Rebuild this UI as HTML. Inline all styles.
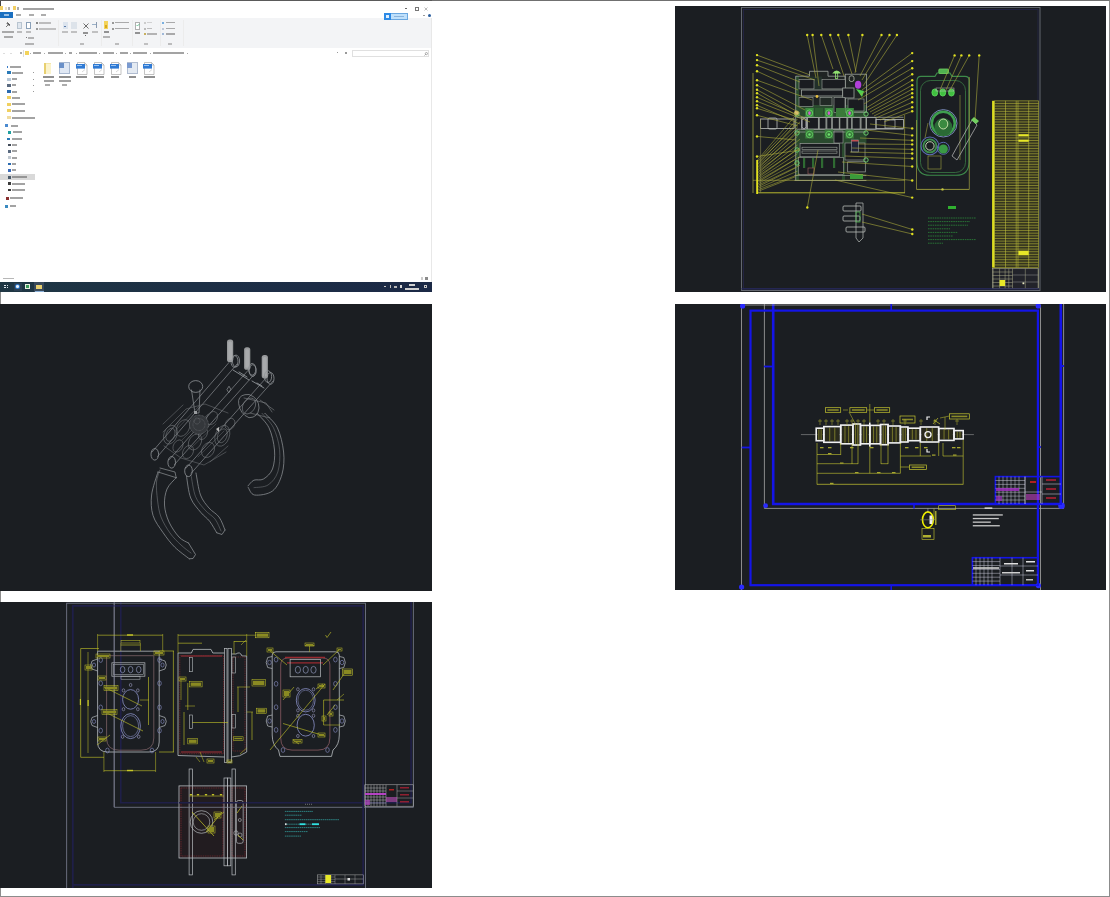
<!DOCTYPE html>
<html><head><meta charset="utf-8">
<style>
html,body{margin:0;padding:0;width:1110px;height:897px;overflow:hidden;background:#fff;}
body{position:relative;font-family:"Liberation Sans",sans-serif;}
.a{position:absolute;}
.bd{position:absolute;left:0;top:0;width:1108px;height:895px;border:1px solid #8c8c8c;border-top-color:#707070;}
.pn{position:absolute;background:#1b1e22;overflow:hidden;}
svg{position:absolute;overflow:hidden;}
.t{position:absolute;font-size:3px;line-height:4px;color:#333;white-space:nowrap;}
</style></head><body>
<div class="bd"></div>
<div id="exp" class="a" style="left:0;top:0;width:432px;height:292px;background:#fff;overflow:hidden;">
<div class="a" style="left:0px;top:0px;width:432px;height:1px;background:#5a5a5a;"></div>
<div class="a" style="left:0px;top:1px;width:1px;height:5px;background:#444;"></div>
<div class="a" style="left:0px;top:6px;width:3px;height:4px;background:#f2cf63;"></div>
<div class="a" style="left:4.5px;top:7px;width:2.5px;height:3px;background:#e8e0c8;"></div>
<div class="a" style="left:8px;top:7px;width:2px;height:3px;background:#b0b0b0;"></div>
<div class="a" style="left:13px;top:6px;width:3px;height:4px;background:#f2cf63;"></div>
<div class="a" style="left:17px;top:7.4px;width:1.5px;height:2.2px;background:#777;opacity:0.62;"></div>
<div class="a" style="left:23px;top:7.5px;width:31px;height:2.0px;background:#6a6a6a;opacity:0.62;"></div>
<div class="a" style="left:404.5px;top:8.2px;width:2.6px;height:0.5px;background:#666;"></div>
<div class="a" style="left:414.5px;top:7px;width:2.4px;height:2.4px;background:#fff;border:0.5px solid #777;"></div>
<svg style="left:424px;top:6.5px" width="4" height="4" viewBox="0 0 4 4"><path d="M0.5,0.5 L3.5,3.5 M3.5,0.5 L0.5,3.5" stroke="#666" stroke-width="0.45"/></svg>
<div class="a" style="left:0px;top:12px;width:13px;height:6px;background:#1a6fc0;"></div>
<div class="a" style="left:4px;top:14.0px;width:5px;height:2px;background:#e6f0fa;opacity:0.62;"></div>
<div class="a" style="left:16px;top:14.0px;width:5px;height:2px;background:#7a7a7a;opacity:0.62;"></div>
<div class="a" style="left:28.5px;top:14.0px;width:5px;height:2px;background:#7a7a7a;opacity:0.62;"></div>
<div class="a" style="left:40.5px;top:14.0px;width:5px;height:2px;background:#7a7a7a;opacity:0.62;"></div>
<div class="a" style="left:427.8px;top:13.8px;width:3.2px;height:3.2px;background:#2a5e9e;border-radius:50%;"></div>
<div class="a" style="left:423px;top:15px;width:1.5px;height:0.8px;background:#999;"></div>
<div class="a" style="left:0px;top:18px;width:431px;height:30px;background:#f3f4f6;border-bottom:1px solid #e3e4e6;"></div>
<div class="a" style="left:384px;top:13px;width:24px;height:7px;background:#bfe0fb;border:0.5px solid #6aa7e0;box-sizing:border-box;"></div>
<div class="a" style="left:384px;top:13px;width:6.5px;height:7px;background:#2d8ae6;"></div>
<div class="a" style="left:385.5px;top:14.5px;width:3.5px;height:3.5px;background:#e0f0ff;"></div>
<div class="a" style="left:394px;top:15.6px;width:10px;height:1.8px;background:#6a9ac8;opacity:0.62;"></div>
<svg style="left:5px;top:21px" width="6" height="7" viewBox="0 0 6 7"><path d="M1,6 L3.5,3.5 M2.5,1.5 L5,4 L4,4.5 L3,3.5 L2,2.5 Z" stroke="#444" stroke-width="0.7" fill="#666"/></svg>
<div class="a" style="left:2px;top:31.199999999999996px;width:12px;height:2.2px;background:#7a7a7a;opacity:0.62;"></div>
<div class="a" style="left:3.5px;top:35.5px;width:9px;height:2.2px;background:#7a7a7a;opacity:0.62;"></div>
<div class="a" style="left:17px;top:22px;width:4.5px;height:6.5px;background:#dfe6ee;border:0.5px solid #b8c4d0;box-sizing:border-box;"></div>
<div class="a" style="left:16.6px;top:31.199999999999996px;width:5px;height:2.2px;background:#9a9a9a;opacity:0.62;"></div>
<div class="a" style="left:26px;top:21.5px;width:5px;height:7.5px;background:#fff;border:0.6px solid #8aa0b8;box-sizing:border-box;"></div>
<div class="a" style="left:26px;top:31.199999999999996px;width:5px;height:2.2px;background:#9a9a9a;opacity:0.62;"></div>
<div class="a" style="left:36px;top:22px;width:1.5px;height:1.5px;background:#888;"></div>
<div class="a" style="left:38.5px;top:22.1px;width:12px;height:1.8px;background:#9a9a9a;opacity:0.62;"></div>
<div class="a" style="left:36px;top:27.8px;width:1.5px;height:2px;background:#999;"></div>
<div class="a" style="left:38.5px;top:27.8px;width:17px;height:1.8px;background:#a0a0a0;opacity:0.62;"></div>
<div class="a" style="left:25.5px;top:36.5px;width:1.5px;height:1.8px;background:#777;"></div>
<div class="a" style="left:28px;top:36.800000000000004px;width:6px;height:1.8px;background:#8a8a8a;opacity:0.62;"></div>
<div class="a" style="left:25px;top:43.300000000000004px;width:8.5px;height:1.8px;background:#8a8a8a;opacity:0.62;"></div>
<div class="a" style="left:57.5px;top:20px;width:0.5px;height:26px;background:#ececec;"></div>
<div class="a" style="left:62.6px;top:21.5px;width:5px;height:7px;background:#dce4ee;"></div>
<div class="a" style="left:64.3px;top:25.5px;width:1.6px;height:1.6px;background:#5a7aa8;"></div>
<div class="a" style="left:62px;top:31.199999999999996px;width:6px;height:2.2px;background:#a0a0a0;opacity:0.62;"></div>
<div class="a" style="left:71px;top:21.5px;width:5.5px;height:7px;background:#dde3ea;"></div>
<div class="a" style="left:71px;top:31.199999999999996px;width:6px;height:2.2px;background:#a0a0a0;opacity:0.62;"></div>
<svg style="left:82.5px;top:22.5px" width="6" height="6" viewBox="0 0 6 6"><path d="M0.5,0.5 L5.5,5.5 M5.5,0.5 L0.5,5.5" stroke="#333" stroke-width="0.7"/></svg>
<div class="a" style="left:82.5px;top:31.699999999999996px;width:5.5px;height:2.2px;background:#555;opacity:0.62;"></div>
<div class="a" style="left:85px;top:34.5px;width:0.8px;height:1.2px;background:#666;"></div>
<div class="a" style="left:92px;top:23.5px;width:4px;height:1px;background:#9ab0c8;"></div>
<div class="a" style="left:95.5px;top:22px;width:0.8px;height:6px;background:#8a9ab0;"></div>
<div class="a" style="left:91.8px;top:31.199999999999996px;width:6px;height:2.2px;background:#a0a0a0;opacity:0.62;"></div>
<div class="a" style="left:80px;top:43.300000000000004px;width:3.5px;height:1.8px;background:#9a9a9a;opacity:0.62;"></div>
<div class="a" style="left:101px;top:20px;width:0.5px;height:26px;background:#ececec;"></div>
<div class="a" style="left:104.2px;top:21px;width:3.8px;height:8px;background:#f3d35a;"></div>
<div class="a" style="left:104.8px;top:25px;width:2.5px;height:2.5px;background:#d8a820;"></div>
<div class="a" style="left:104px;top:31.199999999999996px;width:4.5px;height:2.2px;background:#555;opacity:0.62;"></div>
<div class="a" style="left:103px;top:36.300000000000004px;width:6.5px;height:1.8px;background:#8a8a8a;opacity:0.62;"></div>
<div class="a" style="left:112.3px;top:21.6px;width:1.8px;height:2px;background:#999;"></div>
<div class="a" style="left:115px;top:21.700000000000003px;width:14px;height:1.8px;background:#7a7a7a;opacity:0.62;"></div>
<div class="a" style="left:112.3px;top:27.5px;width:1.8px;height:2px;background:#999;"></div>
<div class="a" style="left:115px;top:27.6px;width:14px;height:1.8px;background:#7a7a7a;opacity:0.62;"></div>
<div class="a" style="left:115px;top:43.300000000000004px;width:4px;height:1.8px;background:#9a9a9a;opacity:0.62;"></div>
<div class="a" style="left:132px;top:20px;width:0.5px;height:26px;background:#ececec;"></div>
<div class="a" style="left:135px;top:21.5px;width:5px;height:8px;background:#fff;border:0.6px solid #b0b0b0;box-sizing:border-box;"></div>
<svg style="left:135.5px;top:23px" width="4" height="4" viewBox="0 0 4 4"><path d="M0.5,2 L1.5,3 L3.5,0.8" stroke="#2a6" stroke-width="0.6" fill="none"/></svg>
<div class="a" style="left:134.5px;top:31.699999999999996px;width:5px;height:2.2px;background:#555;opacity:0.62;"></div>
<div class="a" style="left:143.6px;top:22px;width:2px;height:2px;background:#ccc;"></div>
<div class="a" style="left:146.5px;top:21.700000000000003px;width:5px;height:1.8px;background:#bbb;opacity:0.62;"></div>
<div class="a" style="left:143.6px;top:27.6px;width:2px;height:2px;background:#bbb;"></div>
<div class="a" style="left:146.5px;top:27.6px;width:5px;height:1.8px;background:#9a9a9a;opacity:0.62;"></div>
<div class="a" style="left:143.6px;top:33px;width:2px;height:2px;background:#c8b060;"></div>
<div class="a" style="left:146.5px;top:33.1px;width:10px;height:1.8px;background:#8a8a8a;opacity:0.62;"></div>
<div class="a" style="left:143.5px;top:43.300000000000004px;width:4px;height:1.8px;background:#a0a0a0;opacity:0.62;"></div>
<div class="a" style="left:160px;top:20px;width:0.5px;height:26px;background:#ececec;"></div>
<div class="a" style="left:162px;top:21.5px;width:2.2px;height:2.6px;background:#7ab0e0;"></div>
<div class="a" style="left:165.5px;top:21.700000000000003px;width:9px;height:1.8px;background:#7a7a7a;opacity:0.62;"></div>
<div class="a" style="left:162px;top:27.5px;width:2.2px;height:2.2px;background:#c0c8d8;"></div>
<div class="a" style="left:165.5px;top:27.6px;width:9px;height:1.8px;background:#7a7a7a;opacity:0.62;"></div>
<div class="a" style="left:162px;top:33px;width:2.2px;height:2.2px;background:#a0b8d8;"></div>
<div class="a" style="left:165.5px;top:33.1px;width:9px;height:1.8px;background:#7a7a7a;opacity:0.62;"></div>
<div class="a" style="left:167.5px;top:43.300000000000004px;width:4px;height:1.8px;background:#9a9a9a;opacity:0.62;"></div>
<div class="a" style="left:183px;top:20px;width:0.5px;height:26px;background:#ececec;"></div>
<div class="a" style="left:0px;top:48px;width:431px;height:10px;background:#fff;"></div>
<div class="a" style="left:2.5px;top:52.5px;width:2px;height:1.2px;background:#c8c8c8;opacity:0.62;"></div>
<div class="a" style="left:9.5px;top:52.5px;width:2px;height:1.2px;background:#c8c8c8;opacity:0.62;"></div>
<div class="a" style="left:20px;top:52.4px;width:2px;height:1.4px;background:#777;opacity:0.62;"></div>
<div class="a" style="left:25.2px;top:51.2px;width:3.6px;height:3.6px;background:#f3d35a;"></div>
<div class="a" style="left:22.5px;top:49.5px;width:0.5px;height:7px;background:#ddd;"></div>
<div class="a" style="left:33.3px;top:52.15px;width:8.100000000000001px;height:1.9px;background:#6a6a6a;opacity:0.62;"></div>
<div class="a" style="left:29.799999999999997px;top:52.5px;width:1px;height:1.2px;background:#aaa;"></div>
<div class="a" style="left:47.7px;top:52.15px;width:15.299999999999997px;height:1.9px;background:#6a6a6a;opacity:0.62;"></div>
<div class="a" style="left:44.2px;top:52.5px;width:1px;height:1.2px;background:#aaa;"></div>
<div class="a" style="left:68.5px;top:52.15px;width:3.5px;height:1.9px;background:#6a6a6a;opacity:0.62;"></div>
<div class="a" style="left:65.0px;top:52.5px;width:1px;height:1.2px;background:#aaa;"></div>
<div class="a" style="left:79.3px;top:52.15px;width:18.0px;height:1.9px;background:#6a6a6a;opacity:0.62;"></div>
<div class="a" style="left:75.8px;top:52.5px;width:1px;height:1.2px;background:#aaa;"></div>
<div class="a" style="left:102.7px;top:52.15px;width:11.700000000000003px;height:1.9px;background:#6a6a6a;opacity:0.62;"></div>
<div class="a" style="left:99.2px;top:52.5px;width:1px;height:1.2px;background:#aaa;"></div>
<div class="a" style="left:119.8px;top:52.15px;width:8.200000000000003px;height:1.9px;background:#6a6a6a;opacity:0.62;"></div>
<div class="a" style="left:116.3px;top:52.5px;width:1px;height:1.2px;background:#aaa;"></div>
<div class="a" style="left:133.3px;top:52.15px;width:13.5px;height:1.9px;background:#6a6a6a;opacity:0.62;"></div>
<div class="a" style="left:129.8px;top:52.5px;width:1px;height:1.2px;background:#aaa;"></div>
<div class="a" style="left:153.2px;top:52.15px;width:30.600000000000023px;height:1.9px;background:#6a6a6a;opacity:0.62;"></div>
<div class="a" style="left:149.7px;top:52.5px;width:1px;height:1.2px;background:#aaa;"></div>
<div class="a" style="left:186.5px;top:52.5px;width:1.2px;height:1.2px;background:#aaa;"></div>
<div class="a" style="left:337px;top:52.3px;width:1.4px;height:1px;background:#999;"></div>
<div class="a" style="left:345px;top:51.8px;width:1.6px;height:2px;background:#999;"></div>
<div class="a" style="left:352px;top:49.6px;width:77px;height:7.9px;background:#fff;border:0.5px solid #e0e0e0;box-sizing:border-box;"></div>
<svg style="left:424px;top:51.5px" width="4" height="4" viewBox="0 0 4 4"><circle cx="2.4" cy="1.6" r="1.1" stroke="#666" stroke-width="0.5" fill="none"/><path d="M1.6,2.4 L0.5,3.5" stroke="#666" stroke-width="0.6"/></svg>
<div class="a" style="left:6.7px;top:65.6px;width:1.8px;height:2px;background:#3a7cc8;"></div>
<div class="a" style="left:10.4px;top:65.6px;width:10.299999999999999px;height:2.0px;background:#6a6a6a;opacity:0.62;"></div>
<div class="a" style="left:7.4px;top:71.4px;width:3.2px;height:3px;background:#2a7ab8;"></div>
<div class="a" style="left:12.4px;top:71.9px;width:10.299999999999999px;height:2.0px;background:#6a6a6a;opacity:0.62;"></div>
<div class="a" style="left:32.5px;top:72.30000000000001px;width:0.8px;height:1.2px;background:#999;"></div>
<div class="a" style="left:7.4px;top:77.6px;width:3.2px;height:3px;background:#b8c8d8;"></div>
<div class="a" style="left:12.4px;top:78.1px;width:4.999999999999998px;height:2.0px;background:#6a6a6a;opacity:0.62;"></div>
<div class="a" style="left:32.5px;top:78.5px;width:0.8px;height:1.2px;background:#999;"></div>
<div class="a" style="left:7.4px;top:83.9px;width:3.2px;height:3px;background:#5a6a80;"></div>
<div class="a" style="left:12.4px;top:84.4px;width:4.1px;height:2.0px;background:#6a6a6a;opacity:0.62;"></div>
<div class="a" style="left:32.5px;top:84.80000000000001px;width:0.8px;height:1.2px;background:#999;"></div>
<div class="a" style="left:7.4px;top:90.1px;width:3.2px;height:3px;background:#2a6ab0;"></div>
<div class="a" style="left:12.4px;top:90.6px;width:4.4px;height:2.0px;background:#6a6a6a;opacity:0.62;"></div>
<div class="a" style="left:32.5px;top:91.0px;width:0.8px;height:1.2px;background:#999;"></div>
<div class="a" style="left:7.4px;top:96.4px;width:3.2px;height:3px;background:#f0d060;"></div>
<div class="a" style="left:12.4px;top:96.9px;width:7.299999999999999px;height:2.0px;background:#6a6a6a;opacity:0.62;"></div>
<div class="a" style="left:7.4px;top:102.6px;width:3.2px;height:3px;background:#f0d060;"></div>
<div class="a" style="left:12.4px;top:103.1px;width:12.999999999999998px;height:2.0px;background:#6a6a6a;opacity:0.62;"></div>
<div class="a" style="left:7.4px;top:109.2px;width:3.2px;height:3px;background:#f0d060;"></div>
<div class="a" style="left:12.4px;top:109.7px;width:12.999999999999998px;height:2.0px;background:#6a6a6a;opacity:0.62;"></div>
<div class="a" style="left:7.4px;top:116.0px;width:3.2px;height:3px;background:#f0dca0;"></div>
<div class="a" style="left:12.4px;top:116.5px;width:22.4px;height:2.0px;background:#6a6a6a;opacity:0.62;"></div>
<div class="a" style="left:0px;top:174.1px;width:35px;height:5.8px;background:#d9d9d9;"></div>
<div class="a" style="left:5.3px;top:124.39999999999999px;width:2.8px;height:2.8px;background:#4a8ad0;"></div>
<div class="a" style="left:10.6px;top:124.8px;width:7.4px;height:2.0px;background:#6a6a6a;opacity:0.62;"></div>
<div class="a" style="left:8px;top:130.79999999999998px;width:2.8px;height:2.8px;background:#20a0a0;"></div>
<div class="a" style="left:12.7px;top:131.2px;width:9.5px;height:2.0px;background:#6a6a6a;opacity:0.62;"></div>
<div class="a" style="left:7.4px;top:137.5px;width:2.8px;height:2.8px;background:#2a7ab8;"></div>
<div class="a" style="left:12.2px;top:137.9px;width:10.3px;height:2.0px;background:#6a6a6a;opacity:0.62;"></div>
<div class="a" style="left:7.8px;top:143.7px;width:2.8px;height:2.8px;background:#404a58;"></div>
<div class="a" style="left:12.2px;top:144.1px;width:4.800000000000001px;height:2.0px;background:#6a6a6a;opacity:0.62;"></div>
<div class="a" style="left:7.8px;top:149.79999999999998px;width:2.8px;height:2.8px;background:#5a6a80;"></div>
<div class="a" style="left:12.2px;top:150.2px;width:4.800000000000001px;height:2.0px;background:#6a6a6a;opacity:0.62;"></div>
<div class="a" style="left:7.8px;top:156.2px;width:2.8px;height:2.8px;background:#c0c8d0;"></div>
<div class="a" style="left:12.2px;top:156.6px;width:4.800000000000001px;height:2.0px;background:#6a6a6a;opacity:0.62;"></div>
<div class="a" style="left:7.8px;top:162.6px;width:2.8px;height:2.8px;background:#2a6ab0;"></div>
<div class="a" style="left:12.2px;top:163.0px;width:4.300000000000001px;height:2.0px;background:#6a6a6a;opacity:0.62;"></div>
<div class="a" style="left:7.8px;top:168.9px;width:2.8px;height:2.8px;background:#3a6ab8;"></div>
<div class="a" style="left:12.2px;top:169.3px;width:4.300000000000001px;height:2.0px;background:#6a6a6a;opacity:0.62;"></div>
<div class="a" style="left:7.8px;top:175.79999999999998px;width:2.8px;height:2.8px;background:#4a5a6a;"></div>
<div class="a" style="left:12.2px;top:176.2px;width:15.3px;height:2.0px;background:#6a6a6a;opacity:0.62;"></div>
<div class="a" style="left:7.8px;top:182.2px;width:2.8px;height:2.8px;background:#3a3a3a;"></div>
<div class="a" style="left:12.2px;top:182.6px;width:13.2px;height:2.0px;background:#6a6a6a;opacity:0.62;"></div>
<div class="a" style="left:7.8px;top:188.5px;width:2.8px;height:2.8px;background:#3a3a3a;"></div>
<div class="a" style="left:12.2px;top:188.9px;width:12.8px;height:2.0px;background:#6a6a6a;opacity:0.62;"></div>
<div class="a" style="left:5.8px;top:197.0px;width:2.8px;height:2.8px;background:#8a3030;"></div>
<div class="a" style="left:10px;top:197.4px;width:13.3px;height:2.0px;background:#6a6a6a;opacity:0.62;"></div>
<div class="a" style="left:5.3px;top:204.9px;width:2.8px;height:2.8px;background:#3a8ac0;"></div>
<div class="a" style="left:10px;top:205.3px;width:5.9px;height:2.0px;background:#6a6a6a;opacity:0.62;"></div>
<div class="a" style="left:44.4px;top:62.6px;width:6.4px;height:11px;background:#f3e6a8;"></div>
<div class="a" style="left:45.5px;top:63.5px;width:5px;height:10px;background:#fbf3cc;"></div>
<div class="a" style="left:44.4px;top:62.6px;width:1.2px;height:11px;background:#e8d070;"></div>
<div class="a" style="left:59px;top:62px;width:11px;height:11.5px;background:#e0e8f4;border:0.5px solid #a8b8d0;box-sizing:border-box;"></div>
<div class="a" style="left:59px;top:63px;width:5px;height:5px;background:#6a90c8;"></div>
<div class="a" style="left:127px;top:62px;width:10.5px;height:11.5px;background:#e4eaf2;border:0.5px solid #b0bcd0;box-sizing:border-box;"></div>
<div class="a" style="left:127px;top:63px;width:5px;height:5px;background:#7a9ad0;"></div>
<svg style="left:76px;top:61.5px" width="12" height="13" viewBox="0 0 12 13"><path d="M1.5,0.5 L8.5,0.5 L11,3 L11,12.5 L1.5,12.5 Z" fill="#fff" stroke="#9a9a9a" stroke-width="0.6"/><path d="M8.5,0.5 L8.5,3 L11,3" fill="none" stroke="#9a9a9a" stroke-width="0.5"/><rect x="0" y="2" width="9" height="4.6" fill="#2f7ad4"/><rect x="1" y="3" width="5" height="1" fill="#9cc4f0"/><path d="M6,10 L9,7.5" stroke="#b0b0b0" stroke-width="0.5"/></svg>
<svg style="left:93px;top:61.5px" width="12" height="13" viewBox="0 0 12 13"><path d="M1.5,0.5 L8.5,0.5 L11,3 L11,12.5 L1.5,12.5 Z" fill="#fff" stroke="#9a9a9a" stroke-width="0.6"/><path d="M8.5,0.5 L8.5,3 L11,3" fill="none" stroke="#9a9a9a" stroke-width="0.5"/><rect x="0" y="2" width="9" height="4.6" fill="#2f7ad4"/><rect x="1" y="3" width="5" height="1" fill="#9cc4f0"/><path d="M6,10 L9,7.5" stroke="#b0b0b0" stroke-width="0.5"/></svg>
<svg style="left:110px;top:61.5px" width="12" height="13" viewBox="0 0 12 13"><path d="M1.5,0.5 L8.5,0.5 L11,3 L11,12.5 L1.5,12.5 Z" fill="#fff" stroke="#9a9a9a" stroke-width="0.6"/><path d="M8.5,0.5 L8.5,3 L11,3" fill="none" stroke="#9a9a9a" stroke-width="0.5"/><rect x="0" y="2" width="9" height="4.6" fill="#2f7ad4"/><rect x="1" y="3" width="5" height="1" fill="#9cc4f0"/><path d="M6,10 L9,7.5" stroke="#b0b0b0" stroke-width="0.5"/></svg>
<svg style="left:143.3px;top:61.5px" width="12" height="13" viewBox="0 0 12 13"><path d="M1.5,0.5 L8.5,0.5 L11,3 L11,12.5 L1.5,12.5 Z" fill="#fff" stroke="#9a9a9a" stroke-width="0.6"/><path d="M8.5,0.5 L8.5,3 L11,3" fill="none" stroke="#9a9a9a" stroke-width="0.5"/><rect x="0" y="2" width="9" height="4.6" fill="#2f7ad4"/><rect x="1" y="3" width="5" height="1" fill="#9cc4f0"/><path d="M6,10 L9,7.5" stroke="#b0b0b0" stroke-width="0.5"/></svg>
<div class="a" style="left:43px;top:75.8px;width:11px;height:1.8px;background:#4a4a4a;opacity:0.62;"></div>
<div class="a" style="left:58.5px;top:75.8px;width:12px;height:1.8px;background:#4a4a4a;opacity:0.62;"></div>
<div class="a" style="left:76px;top:75.8px;width:11px;height:1.8px;background:#4a4a4a;opacity:0.62;"></div>
<div class="a" style="left:93.5px;top:75.8px;width:10px;height:1.8px;background:#4a4a4a;opacity:0.62;"></div>
<div class="a" style="left:111px;top:75.8px;width:8px;height:1.8px;background:#4a4a4a;opacity:0.62;"></div>
<div class="a" style="left:129px;top:75.8px;width:7px;height:1.8px;background:#4a4a4a;opacity:0.62;"></div>
<div class="a" style="left:144px;top:75.8px;width:11px;height:1.8px;background:#4a4a4a;opacity:0.62;"></div>
<div class="a" style="left:43.5px;top:79.7px;width:10px;height:2.0px;background:#6a6a6a;opacity:0.62;"></div>
<div class="a" style="left:45px;top:83.9px;width:5px;height:2.0px;background:#7a7a7a;opacity:0.62;"></div>
<div class="a" style="left:58.5px;top:79.7px;width:12px;height:2.0px;background:#6a6a6a;opacity:0.62;"></div>
<div class="a" style="left:62px;top:84.10000000000001px;width:5px;height:1.6px;background:#7a7a7a;opacity:0.62;"></div>
<div class="a" style="left:3px;top:277.6px;width:11px;height:1.8px;background:#8a8a8a;opacity:0.62;"></div>
<div class="a" style="left:421px;top:277px;width:1.8px;height:2.5px;background:#ccc;"></div>
<div class="a" style="left:425px;top:277px;width:2.5px;height:2.5px;background:#8a8a8a;"></div>
<div class="a" style="left:430.8px;top:18px;width:0.6px;height:264px;background:#e8e8e8;"></div>
<div class="a" style="left:0px;top:281.8px;width:432px;height:10px;background:linear-gradient(90deg,#1f3744,#1d2f45 45%,#1b2946);"></div>
<div class="a" style="left:3.8px;top:284.5px;width:3.8px;height:3.8px;background:#dfe8ee;"></div>
<div class="a" style="left:5.5px;top:284.5px;width:0.4px;height:3.8px;background:#1f3744;"></div>
<div class="a" style="left:3.8px;top:286.3px;width:3.8px;height:0.4px;background:#1f3744;"></div>
<div class="a" style="left:13.5px;top:283px;width:8px;height:8px;background:#2b3f52;"></div>
<div class="a" style="left:14.8px;top:284px;width:5.2px;height:5.2px;background:#2d7bd0;border-radius:50%;"></div>
<div class="a" style="left:16px;top:285.3px;width:2.6px;height:2.6px;background:#e8f0f8;border-radius:50%;"></div>
<div class="a" style="left:25.4px;top:283.8px;width:4.9px;height:5.6px;background:#e8f0e0;"></div>
<div class="a" style="left:26.3px;top:284.8px;width:3px;height:3.5px;background:#3a9a5a;"></div>
<div class="a" style="left:34px;top:282px;width:10.3px;height:9.8px;background:#3a4a5c;"></div>
<div class="a" style="left:35.8px;top:284.5px;width:6.5px;height:4.5px;background:#e8d070;"></div>
<div class="a" style="left:35px;top:290.6px;width:9px;height:1px;background:#8ab0d8;"></div>
<div class="a" style="left:384px;top:286px;width:1.8px;height:0.8px;background:#c8c8c8;"></div>
<div class="a" style="left:389.5px;top:285px;width:1.6px;height:2.8px;background:#c0c0c0;"></div>
<div class="a" style="left:394px;top:285.5px;width:2.5px;height:2px;background:#b8b8b8;"></div>
<div class="a" style="left:399.5px;top:285px;width:2.5px;height:2.8px;background:#d8d8d8;"></div>
<div class="a" style="left:409px;top:284px;width:5.5px;height:1.6px;background:#d0d0d0;"></div>
<div class="a" style="left:405px;top:288.3px;width:13.5px;height:1.8px;background:#d0d0d0;"></div>
<div class="a" style="left:423.8px;top:284.5px;width:3.2px;height:3.5px;background:#0f1a30;border:0.6px solid #c8c8c8;box-sizing:border-box;"></div>
</div>
<svg style="left:0px;top:304px" width="432" height="287" viewBox="0 304 432 287"><rect x="0" y="304" width="432" height="287" fill="#1b1e22"/><path d="M237.2,363.8 L157.5,456.6" stroke="#8f9397" stroke-width="0.65" fill="none" stroke-linejoin="round" stroke-linecap="round"/><path d="M231.8,359.2 L152.1,452.0" stroke="#8f9397" stroke-width="0.65" fill="none" stroke-linejoin="round" stroke-linecap="round"/><ellipse cx="154.8" cy="454.3" rx="3.8" ry="5.8" transform="rotate(180.65717807954863 154.8 454.3)" stroke="#8f9397" stroke-width="0.8" fill="none"/><ellipse cx="234.5" cy="361.5" rx="3.5" ry="5.9" transform="rotate(0 234.5 361.5)" stroke="#8f9397" stroke-width="0.8" fill="none"/><path d="M255.4,373.0 L174.4,464.7" stroke="#8f9397" stroke-width="0.65" fill="none" stroke-linejoin="round" stroke-linecap="round"/><path d="M250.0,368.2 L169.0,459.9" stroke="#8f9397" stroke-width="0.65" fill="none" stroke-linejoin="round" stroke-linecap="round"/><ellipse cx="171.7" cy="462.3" rx="3.8" ry="5.8" transform="rotate(181.4546485951503 171.7 462.3)" stroke="#8f9397" stroke-width="0.8" fill="none"/><ellipse cx="252.7" cy="370.6" rx="3.5" ry="5.9" transform="rotate(0 252.7 370.6)" stroke="#8f9397" stroke-width="0.8" fill="none"/><path d="M273.2,380.8 L191.2,473.2" stroke="#8f9397" stroke-width="0.65" fill="none" stroke-linejoin="round" stroke-linecap="round"/><path d="M267.8,376.0 L185.8,468.4" stroke="#8f9397" stroke-width="0.65" fill="none" stroke-linejoin="round" stroke-linecap="round"/><ellipse cx="188.5" cy="470.8" rx="3.8" ry="5.8" transform="rotate(181.58732064841314 188.5 470.8)" stroke="#8f9397" stroke-width="0.8" fill="none"/><ellipse cx="270.5" cy="378.4" rx="3.5" ry="5.9" transform="rotate(0 270.5 378.4)" stroke="#8f9397" stroke-width="0.8" fill="none"/><rect x="227" y="339.4" width="6.2" height="22.600000000000023" rx="2.6" fill="#989a9c"/><rect x="228.2" y="341.4" width="3.8" height="18.600000000000023" rx="1.5" fill="#a8aaac"/><rect x="244.1" y="347.2" width="6.2" height="22.600000000000023" rx="2.6" fill="#989a9c"/><rect x="245.29999999999998" y="349.2" width="3.8" height="18.600000000000023" rx="1.5" fill="#a8aaac"/><rect x="261.7" y="355" width="6.2" height="23.399999999999977" rx="2.6" fill="#989a9c"/><rect x="262.9" y="357" width="3.8" height="19.399999999999977" rx="1.5" fill="#a8aaac"/><ellipse cx="236" cy="361" rx="3.6" ry="5.9" transform="rotate(0 236 361)" stroke="#8f9397" stroke-width="0.8" fill="none"/><ellipse cx="252.2" cy="369.3" rx="3.6" ry="5.9" transform="rotate(0 252.2 369.3)" stroke="#8f9397" stroke-width="0.8" fill="none"/><ellipse cx="268" cy="376.6" rx="3.6" ry="5.9" transform="rotate(0 268 376.6)" stroke="#8f9397" stroke-width="0.8" fill="none"/><path d="M233,370 L249,380 M239,372 L247,377 M252,381 L264,388 M257,383 L262,386" stroke="#8f9397" stroke-width="0.9" fill="none" stroke-linejoin="round" stroke-linecap="round"/><ellipse cx="195.7" cy="386.5" rx="7" ry="5.9" transform="rotate(0 195.7 386.5)" stroke="#8f9397" stroke-width="0.8" fill="none"/><path d="M191.5,390 L195,413 L199,413 L200,390" stroke="#8f9397" stroke-width="0.7" fill="none" stroke-linejoin="round" stroke-linecap="round"/><path d="M227.1,389.3 L229,386.2 L230.8,389.3 L229,392.4 Z" stroke="#8f9397" stroke-width="0.7" fill="none" stroke-linejoin="round" stroke-linecap="round"/><ellipse cx="170.4" cy="434.7" rx="6.5" ry="9.7" transform="rotate(20 170.4 434.7)" stroke="#75797d" stroke-width="0.55" fill="none"/><ellipse cx="170.4" cy="434.7" rx="4.2" ry="6.8" transform="rotate(20 170.4 434.7)" stroke="#75797d" stroke-width="0.55" fill="none"/><ellipse cx="222.3" cy="435.8" rx="7" ry="10.8" transform="rotate(20 222.3 435.8)" stroke="#75797d" stroke-width="0.55" fill="none"/><ellipse cx="222.3" cy="435.8" rx="4.6" ry="7.2" transform="rotate(20 222.3 435.8)" stroke="#75797d" stroke-width="0.55" fill="none"/><ellipse cx="183" cy="428" rx="6" ry="9" transform="rotate(30 183 428)" stroke="#75797d" stroke-width="0.55" fill="none"/><ellipse cx="195" cy="442" rx="6" ry="8.5" transform="rotate(30 195 442)" stroke="#75797d" stroke-width="0.55" fill="none"/><ellipse cx="208" cy="450" rx="6" ry="8" transform="rotate(30 208 450)" stroke="#75797d" stroke-width="0.55" fill="none"/><ellipse cx="188" cy="452" rx="5" ry="7" transform="rotate(30 188 452)" stroke="#75797d" stroke-width="0.55" fill="none"/><ellipse cx="212" cy="418" rx="5" ry="7" transform="rotate(30 212 418)" stroke="#75797d" stroke-width="0.55" fill="none"/><ellipse cx="178" cy="446" rx="4.5" ry="6.5" transform="rotate(30 178 446)" stroke="#75797d" stroke-width="0.55" fill="none"/><ellipse cx="230" cy="424" rx="4.5" ry="6" transform="rotate(30 230 424)" stroke="#75797d" stroke-width="0.55" fill="none"/><ellipse cx="203" cy="434" rx="4" ry="6" transform="rotate(30 203 434)" stroke="#75797d" stroke-width="0.55" fill="none"/><path d="M163,432 L186,409 L205,404 L228,413 M164,446 L181,458 L204,465 L226,452 M183,405 L163,424 M228,446 L210,462" stroke="#6f7377" stroke-width="0.55" fill="none" stroke-linejoin="round" stroke-linecap="round"/><path d="M176,430 L199,406 M182,440 L208,414 M190,449 L216,424 M198,457 L224,431" stroke="#62666a" stroke-width="0.5" fill="none" stroke-linejoin="round" stroke-linecap="round"/><circle cx="199" cy="424.6" r="9.5" fill="#34373b"/><circle cx="199" cy="424.6" r="9.5" fill="none" stroke="#8a8d90" stroke-width="0.6" stroke-dasharray="0.7,0.7"/><circle cx="199" cy="424.6" r="6" fill="none" stroke="#7a7d80" stroke-width="0.5" stroke-dasharray="0.7,0.7"/><circle cx="197" cy="421" r="3" fill="none" stroke="#8a8d90" stroke-width="0.5" stroke-dasharray="0.6,0.6"/><rect x="194" y="411" width="3" height="3" fill="#9a9da0"/><path d="M216,429 L219,427 L219,432 Z" fill="#b8b8b8"/><path d="M238.7,400 Q240,394 249,394.5 Q259,398 259,408 Q258,417.7 249,417.7 Q240,414 238.7,404 Z" stroke="#8f9397" stroke-width="0.7" fill="none" stroke-linejoin="round" stroke-linecap="round"/><ellipse cx="249" cy="406" rx="6" ry="8.5" transform="rotate(30 249 406)" stroke="#7d8185" stroke-width="0.6" fill="none"/><path d="M244,398 L266,403 L272,412 M250,413 L270,418 M260,400 L274,410" stroke="#7d8185" stroke-width="0.6" fill="none" stroke-linejoin="round" stroke-linecap="round"/><path d="M158.0,472.0 C156.9,475.8 152.4,487.8 151.6,495.0 C150.8,502.2 151.1,509.1 153.0,515.4 C154.9,521.7 159.6,527.5 163.2,532.8 C166.8,538.1 170.5,542.9 174.8,547.2 C179.2,551.5 186.9,556.9 189.3,558.8" stroke="#8f9397" stroke-width="0.75" fill="none" stroke-linejoin="round" stroke-linecap="round"/><path d="M160.0,470.0 C159.4,472.0 156.9,477.0 156.5,482.0 C156.1,487.0 156.8,494.2 157.5,500.0 C158.2,505.8 158.9,511.5 161.0,517.0 C163.1,522.5 166.7,528.3 170.0,533.0 C173.3,537.7 177.5,541.7 181.0,545.0 C184.5,548.3 189.3,551.7 191.0,553.0" stroke="#7d8185" stroke-width="0.55" fill="none" stroke-linejoin="round" stroke-linecap="round"/><path d="M176.2,477.7 C174.7,479.6 168.9,484.4 167.0,489.0 C165.1,493.6 164.2,499.5 164.5,505.0 C164.8,510.5 166.6,516.7 169.0,522.0 C171.4,527.3 175.8,533.5 179.0,537.0 C182.2,540.5 186.9,542.0 188.5,543.0" stroke="#8f9397" stroke-width="0.75" fill="none" stroke-linejoin="round" stroke-linecap="round"/><path d="M188.5,543 L195.5,554.5 L193,558.5 L189.3,558.8" stroke="#8f9397" stroke-width="0.75" fill="none" stroke-linejoin="round" stroke-linecap="round"/><path d="M158,472 L176.2,477.7 M160,468 L175,472 L176.2,477.7" stroke="#8f9397" stroke-width="0.7" fill="none" stroke-linejoin="round" stroke-linecap="round"/><path d="M186.5,476.2 C187.2,479.8 188.3,491.9 190.7,498.0 C193.1,504.1 197.8,508.6 200.9,512.5 C204.1,516.4 206.9,517.8 209.6,521.2 C212.2,524.6 215.6,530.9 216.8,532.8" stroke="#8f9397" stroke-width="0.75" fill="none" stroke-linejoin="round" stroke-linecap="round"/><path d="M196.0,473.0 C196.8,476.7 198.3,489.2 200.5,495.0 C202.7,500.8 205.9,504.3 209.0,508.0 C212.1,511.7 216.3,513.3 219.0,517.0 C221.7,520.7 224.0,527.8 225.0,530.0" stroke="#8f9397" stroke-width="0.75" fill="none" stroke-linejoin="round" stroke-linecap="round"/><path d="M191.0,475.0 C191.8,478.6 193.2,490.7 195.5,496.5 C197.8,502.3 201.8,506.2 205.0,510.0 C208.2,513.8 212.3,515.5 215.0,519.0 C217.7,522.5 220.0,529.0 221.0,531.0" stroke="#7d8185" stroke-width="0.5" fill="none" stroke-linejoin="round" stroke-linecap="round"/><path d="M216.8,532.8 L222,534.5 L225,530" stroke="#8f9397" stroke-width="0.75" fill="none" stroke-linejoin="round" stroke-linecap="round"/><path d="M264.8,413.3 C266.9,415.7 274.3,421.4 277.4,427.8 C280.5,434.2 282.8,444.3 283.6,452.0 C284.4,459.7 283.9,467.7 282.0,474.2 C280.1,480.7 277.1,487.5 272.5,491.0 C267.9,494.5 258.7,495.6 254.6,495.0 C250.5,494.4 249.2,488.5 248.1,487.2" stroke="#8f9397" stroke-width="0.75" fill="none" stroke-linejoin="round" stroke-linecap="round"/><path d="M257.0,413.3 C259.0,415.7 266.1,421.7 269.0,427.8 C271.9,433.9 273.9,443.1 274.5,450.0 C275.1,456.9 274.3,464.2 272.5,469.0 C270.7,473.8 266.6,477.1 263.5,479.0 C260.4,480.9 256.5,479.1 253.9,480.2 C251.3,481.3 249.1,484.9 248.1,485.8" stroke="#8f9397" stroke-width="0.75" fill="none" stroke-linejoin="round" stroke-linecap="round"/><path d="M262.0,413.3 C263.9,415.7 270.6,421.8 273.5,427.8 C276.4,433.9 278.9,442.2 279.6,449.6 C280.3,457.0 279.7,466.1 277.8,472.0 C275.9,477.9 272.0,482.4 268.0,485.0 C264.0,487.6 256.3,487.2 254.0,487.6" stroke="#7d8185" stroke-width="0.5" fill="none" stroke-linejoin="round" stroke-linecap="round"/></svg>
<svg style="left:0px;top:602px" width="432" height="286" viewBox="0 602 432 286"><rect x="0" y="602" width="432" height="286" fill="#1b1e22"/><path d="M114.2,595 L114.2,807.3 L413.4,807.3 L413.4,595" stroke="#7c8092" stroke-width="0.8" fill="none"/><path d="M120.8,595 L120.8,802.8 L411.1,802.8 L411.1,595" stroke="#1f1f48" stroke-width="1.6" fill="none"/><rect x="66.7" y="603.2" width="298.9" height="300" stroke="#7c8092" stroke-width="0.8" fill="none"/><path d="M72.8,895 L72.8,605.9 L363.2,605.9 L363.2,884.8 L72.8,884.8" stroke="#1f1f48" stroke-width="1.8" fill="none"/><path d="M97.6,651.2 L159.2,651.2 L159.2,742 Q159.2,752 149,752 L107.6,752 Q97.6,752 97.6,742 Z" stroke="#b8bcc0" stroke-width="0.8" fill="none"/><path d="M106.6,655.7 L153.8,655.7 L153.8,738 Q153.8,750.2 141,750.2 L119,750.2 Q106.6,750.2 106.6,738 Z" stroke="#8a6a70" stroke-width="0.7" fill="none"/><path d="M97.6,659 L92,661 Q89.5,665 92,669 L97.6,671" stroke="#b8bcc0" stroke-width="0.7" fill="none"/><ellipse cx="94" cy="665" rx="1.6" ry="2" stroke="#8a90c8" stroke-width="0.6" fill="none"/><path d="M97.6,715.5 L92,717.5 Q89.5,721.5 92,725.5 L97.6,727.5" stroke="#b8bcc0" stroke-width="0.7" fill="none"/><ellipse cx="94" cy="721.5" rx="1.6" ry="2" stroke="#8a90c8" stroke-width="0.6" fill="none"/><path d="M159.2,659 L165,661 Q167.5,665 165,669 L159.2,671" stroke="#b8bcc0" stroke-width="0.7" fill="none"/><ellipse cx="162.5" cy="665" rx="1.6" ry="2" stroke="#8a90c8" stroke-width="0.6" fill="none"/><path d="M159.2,715.5 L165,717.5 Q167.5,721.5 165,725.5 L159.2,727.5" stroke="#b8bcc0" stroke-width="0.7" fill="none"/><ellipse cx="162.5" cy="721.5" rx="1.6" ry="2" stroke="#8a90c8" stroke-width="0.6" fill="none"/><ellipse cx="100.7" cy="660" rx="1.8" ry="2.4" stroke="#8a90c8" stroke-width="0.6" fill="none"/><ellipse cx="159.5" cy="660" rx="1.8" ry="2.4" stroke="#8a90c8" stroke-width="0.6" fill="none"/><ellipse cx="100.7" cy="683.3" rx="1.8" ry="2.4" stroke="#8a90c8" stroke-width="0.6" fill="none"/><ellipse cx="159.5" cy="683.3" rx="1.8" ry="2.4" stroke="#8a90c8" stroke-width="0.6" fill="none"/><ellipse cx="100.7" cy="707.4" rx="1.8" ry="2.4" stroke="#8a90c8" stroke-width="0.6" fill="none"/><ellipse cx="159.5" cy="707.4" rx="1.8" ry="2.4" stroke="#8a90c8" stroke-width="0.6" fill="none"/><ellipse cx="100.7" cy="730.6" rx="1.8" ry="2.4" stroke="#8a90c8" stroke-width="0.6" fill="none"/><ellipse cx="159.5" cy="730.6" rx="1.8" ry="2.4" stroke="#8a90c8" stroke-width="0.6" fill="none"/><ellipse cx="107.4" cy="750.5" rx="1.8" ry="2.4" stroke="#8a90c8" stroke-width="0.6" fill="none"/><ellipse cx="152" cy="750.5" rx="1.8" ry="2.4" stroke="#8a90c8" stroke-width="0.6" fill="none"/><rect x="111.9" y="662.8" width="33" height="13.4" rx="0" stroke="#b8bcc0" stroke-width="0.7" fill="none"/><rect x="113.5" y="664.5" width="30" height="10" rx="0" stroke="#b8bcc0" stroke-width="0.5" fill="none"/><ellipse cx="122.6" cy="669.6" rx="2.3" ry="3.2" stroke="#a0a8d0" stroke-width="0.6" fill="none"/><ellipse cx="130.6" cy="669.6" rx="2.3" ry="3.2" stroke="#a0a8d0" stroke-width="0.6" fill="none"/><ellipse cx="138.7" cy="669.6" rx="2.3" ry="3.2" stroke="#a0a8d0" stroke-width="0.6" fill="none"/><rect x="121" y="676.2" width="19" height="3" rx="0" stroke="#b8bcc0" stroke-width="0.5" fill="none"/><ellipse cx="130.6" cy="699.4" rx="8" ry="9.8" stroke="#8a90c8" stroke-width="0.8" fill="none"/><ellipse cx="130.6" cy="726.1" rx="9.8" ry="12.5" stroke="#8a90c8" stroke-width="0.8" fill="none"/><ellipse cx="130.6" cy="726.1" rx="8" ry="10.5" stroke="#8a90c8" stroke-width="0.6" fill="none"/><ellipse cx="123.5" cy="690.4" rx="1.3" ry="1.6" stroke="#9a9ac0" stroke-width="0.6" fill="none"/><ellipse cx="137.8" cy="690.4" rx="1.3" ry="1.6" stroke="#9a9ac0" stroke-width="0.6" fill="none"/><ellipse cx="123.5" cy="709.2" rx="1.3" ry="1.6" stroke="#9a9ac0" stroke-width="0.6" fill="none"/><ellipse cx="137.8" cy="709.2" rx="1.3" ry="1.6" stroke="#9a9ac0" stroke-width="0.6" fill="none"/><ellipse cx="122.6" cy="736.8" rx="1.3" ry="1.6" stroke="#9a9ac0" stroke-width="0.6" fill="none"/><ellipse cx="138.7" cy="736.8" rx="1.3" ry="1.6" stroke="#9a9ac0" stroke-width="0.6" fill="none"/><ellipse cx="130.6" cy="685" rx="1.3" ry="1.6" stroke="#9a9ac0" stroke-width="0.6" fill="none"/><line x1="114.2" y1="603" x2="114.2" y2="807" stroke="#7c8092" stroke-width="0.7"/><line x1="80.7" y1="648.5" x2="80.7" y2="757.3" stroke="#c8c828" stroke-width="0.6"/><line x1="80.7" y1="648.5" x2="99" y2="648.5" stroke="#c8c828" stroke-width="0.6"/><line x1="80.7" y1="757.3" x2="104" y2="757.3" stroke="#c8c828" stroke-width="0.6"/><line x1="173.4" y1="651" x2="173.4" y2="752" stroke="#c8c828" stroke-width="0.6"/><line x1="159" y1="651" x2="174" y2="651" stroke="#c8c828" stroke-width="0.6"/><line x1="159" y1="752" x2="174" y2="752" stroke="#c8c828" stroke-width="0.6"/><line x1="97.6" y1="635.2" x2="162.7" y2="635.2" stroke="#c8c828" stroke-width="0.6"/><line x1="97.6" y1="634" x2="97.6" y2="651" stroke="#c8c828" stroke-width="0.5"/><line x1="162.7" y1="634" x2="162.7" y2="651" stroke="#c8c828" stroke-width="0.5"/><line x1="120.8" y1="645" x2="140.4" y2="645" stroke="#c8c828" stroke-width="0.6"/><line x1="120.8" y1="643" x2="120.8" y2="651" stroke="#c8c828" stroke-width="0.5"/><line x1="140.4" y1="643" x2="140.4" y2="651" stroke="#c8c828" stroke-width="0.5"/><rect x="121" y="640.5" width="19" height="2.5" rx="0" stroke="#c8c828" stroke-width="0.5" fill="none"/><line x1="103.9" y1="770.7" x2="155.6" y2="770.7" stroke="#c8c828" stroke-width="0.6"/><line x1="103.9" y1="752" x2="103.9" y2="772" stroke="#c8c828" stroke-width="0.5"/><line x1="155.6" y1="752" x2="155.6" y2="772" stroke="#c8c828" stroke-width="0.5"/><line x1="88" y1="652" x2="88" y2="753" stroke="#c8c828" stroke-width="0.5"/><line x1="148.5" y1="677" x2="148.5" y2="725" stroke="#c8c828" stroke-width="0.6"/><line x1="140" y1="700" x2="149" y2="700" stroke="#c8c828" stroke-width="0.5"/><line x1="104" y1="687" x2="142" y2="706" stroke="#c8c828" stroke-width="0.6"/><line x1="103" y1="711" x2="143" y2="731" stroke="#c8c828" stroke-width="0.6"/><rect x="104" y="685.5" width="14" height="5.0" stroke="#c8c828" stroke-width="0.5" fill="none"/><rect x="105" y="686.5" width="12" height="3.0" fill="#8a8a22"/><rect x="102" y="709.5" width="15" height="5.0" stroke="#c8c828" stroke-width="0.5" fill="none"/><rect x="103" y="710.5" width="13" height="3.0" fill="#8a8a22"/><line x1="97" y1="745" x2="110" y2="735" stroke="#c8c828" stroke-width="0.6"/><rect x="98" y="737" width="8" height="4" stroke="#c8c828" stroke-width="0.5" fill="none"/><rect x="99" y="738" width="6" height="2" fill="#8a8a22"/><rect x="85" y="665" width="7" height="5" stroke="#c8c828" stroke-width="0.5" fill="none"/><rect x="86" y="666" width="5" height="3" fill="#8a8a22"/><rect x="98" y="676" width="8" height="4" stroke="#c8c828" stroke-width="0.5" fill="none"/><rect x="99" y="677" width="6" height="2" fill="#8a8a22"/><rect x="96" y="654" width="14" height="4" stroke="#c8c828" stroke-width="0.5" fill="none"/><rect x="97" y="655" width="12" height="2" fill="#8a8a22"/><rect x="154" y="651" width="10" height="4" stroke="#c8c828" stroke-width="0.5" fill="none"/><rect x="155" y="652" width="8" height="2" fill="#8a8a22"/><rect x="87.5" y="700" width="1.2" height="6" fill="#c8c828"/><rect x="79.8" y="699" width="1.2" height="6" fill="#c8c828"/><rect x="127" y="634.3" width="6" height="1.4" fill="#c8c828"/><rect x="127" y="769.8" width="6" height="1.4" fill="#c8c828"/><path d="M178,653 L191.4,653 L193,649.4 L211,649.4 L212.8,653 L224.4,653" stroke="#b8bcc0" stroke-width="0.8" fill="none"/><path d="M178,653 L178,755.5 L224.4,757" stroke="#b8bcc0" stroke-width="0.8" fill="none"/><rect x="179.8" y="655.7" width="43.7" height="98" stroke="#5a2428" stroke-width="1.0" stroke-dasharray="1.5,0.8" fill="none"/><path d="M181,656 L222,656 M181,752 L222,752" stroke="#7a2a30" stroke-width="1.3" fill="none"/><rect x="224.4" y="648.5" width="2.6" height="114" rx="0" stroke="#b8bcc0" stroke-width="0.7" fill="none"/><rect x="228" y="648.5" width="3.5" height="114" rx="0" stroke="#b8bcc0" stroke-width="0.7" fill="none"/><path d="M231.5,654 L236,654 Q240,651 242,656 L246.7,656 L246.7,752 Q240,757 231.5,757" stroke="#b8bcc0" stroke-width="0.8" fill="none"/><rect x="233" y="657" width="12" height="94" stroke="#5a2428" stroke-width="1" stroke-dasharray="1.5,0.8" fill="none"/><rect x="189.6" y="657.4" width="2.7" height="14.3" rx="0" stroke="#b8bcc0" stroke-width="0.6" fill="none"/><rect x="189.6" y="715" width="2.7" height="13.5" rx="0" stroke="#b8bcc0" stroke-width="0.6" fill="none"/><rect x="232" y="657" width="3.5" height="16" rx="0" stroke="#b8bcc0" stroke-width="0.6" fill="none"/><rect x="232" y="714.5" width="3.5" height="13.5" rx="0" stroke="#b8bcc0" stroke-width="0.6" fill="none"/><line x1="192.3" y1="722.5" x2="228" y2="722.5" stroke="#c8c828" stroke-width="0.6"/><line x1="178" y1="635.2" x2="246.7" y2="635.2" stroke="#c8c828" stroke-width="0.6"/><line x1="178" y1="634" x2="178" y2="653" stroke="#c8c828" stroke-width="0.5"/><line x1="246.7" y1="634" x2="246.7" y2="656" stroke="#c8c828" stroke-width="0.5"/><line x1="246.7" y1="635.2" x2="256" y2="635.2" stroke="#c8c828" stroke-width="0.5"/><rect x="255.6" y="632.5" width="13.400000000000006" height="5.2999999999999545" stroke="#d8d830" stroke-width="0.5" fill="none"/><rect x="256.6" y="633.5" width="11.400000000000006" height="3.2999999999999545" fill="#8a8a22"/><line x1="178" y1="643.2" x2="202" y2="643.2" stroke="#c8c828" stroke-width="0.6"/><line x1="234" y1="641.5" x2="246.7" y2="641.5" stroke="#c8c828" stroke-width="0.6"/><line x1="234" y1="641" x2="234" y2="654" stroke="#c8c828" stroke-width="0.5"/><line x1="187.8" y1="683" x2="187.8" y2="710" stroke="#c8c828" stroke-width="0.6"/><line x1="185" y1="706" x2="195" y2="706" stroke="#c8c828" stroke-width="0.5"/><line x1="184" y1="712" x2="184" y2="745" stroke="#c8c828" stroke-width="0.6"/><rect x="189.6" y="681.5" width="12.5" height="5.399999999999977" stroke="#c8c828" stroke-width="0.5" fill="none"/><rect x="190.6" y="682.5" width="10.5" height="3.3999999999999773" fill="#8a8a22"/><rect x="252" y="679.7" width="13.399999999999977" height="6.2999999999999545" stroke="#c8c828" stroke-width="0.5" fill="none"/><rect x="253" y="680.7" width="11.399999999999977" height="4.2999999999999545" fill="#8a8a22"/><rect x="256.5" y="708.2" width="9.800000000000011" height="5.399999999999977" stroke="#c8c828" stroke-width="0.5" fill="none"/><rect x="257.5" y="709.2" width="7.800000000000011" height="3.3999999999999773" fill="#8a8a22"/><rect x="187.8" y="738.6" width="9.799999999999983" height="5.2999999999999545" stroke="#c8c828" stroke-width="0.5" fill="none"/><rect x="188.8" y="739.6" width="7.799999999999983" height="3.2999999999999545" fill="#8a8a22"/><rect x="233.3" y="736.8" width="9.799999999999983" height="3.5" stroke="#c8c828" stroke-width="0.5" fill="none"/><rect x="234.3" y="737.8" width="7.799999999999983" height="1.5" fill="#8a8a22"/><line x1="252" y1="712" x2="252" y2="740" stroke="#c8c828" stroke-width="0.6"/><line x1="246.7" y1="712" x2="253" y2="712" stroke="#c8c828" stroke-width="0.5"/><line x1="238" y1="687" x2="238" y2="712" stroke="#c8c828" stroke-width="0.6"/><line x1="237" y1="687" x2="250" y2="687" stroke="#c8c828" stroke-width="0.5"/><line x1="181" y1="678" x2="181" y2="700" stroke="#c8c828" stroke-width="0.5"/><rect x="179" y="677" width="7" height="4" stroke="#c8c828" stroke-width="0.5" fill="none"/><rect x="180" y="678" width="5" height="2" fill="#8a8a22"/><rect x="207" y="759" width="7" height="4" stroke="#c8c828" stroke-width="0.5" fill="none"/><rect x="208" y="760" width="5" height="2" fill="#8a8a22"/><line x1="196" y1="757" x2="200" y2="762" stroke="#c8c828" stroke-width="0.5"/><line x1="200" y1="752" x2="204" y2="762" stroke="#c8c828" stroke-width="0.5"/><rect x="227" y="760" width="5" height="3" stroke="#c8c828" stroke-width="0.5" fill="none"/><rect x="228" y="761" width="3" height="1" fill="#8a8a22"/><line x1="240" y1="754" x2="246.7" y2="748" stroke="#c8c828" stroke-width="0.5"/><line x1="241" y1="645" x2="246" y2="640" stroke="#c8c828" stroke-width="0.5"/><path d="M272.2,655 Q272.2,651.8 276,651.8 L335.5,651.8 Q339.3,651.8 339.3,655 L339.3,735 Q339.3,745 333,750 L331.5,756.4 L280,756.4 L278.5,750 Q272.2,745 272.2,735 Z" stroke="#b8bcc0" stroke-width="0.8" fill="none"/><path d="M280.7,665 Q280.7,658 288,658 L322.6,658 Q329.9,658 329.9,665 L329.9,738 Q329.9,750.1 318,750.1 L292,750.1 Q280.7,750.1 280.7,738 Z" stroke="#8a5a62" stroke-width="0.8" fill="none"/><line x1="285" y1="657.3" x2="325" y2="657.3" stroke="#9a2a30" stroke-width="1.2"/><line x1="287" y1="662.8" x2="323" y2="662.8" stroke="#9a2a30" stroke-width="1.2"/><path d="M272.2,656.5 L267.7,657.5 Q264.7,662.5 267.7,667.5 L272.2,668.5" stroke="#b8bcc0" stroke-width="0.7" fill="none"/><ellipse cx="269.5" cy="662.5" rx="1.8" ry="2.2" stroke="#8a90c8" stroke-width="0.6" fill="none"/><path d="M272.2,715 L267.7,716 Q264.7,721 267.7,726 L272.2,727" stroke="#b8bcc0" stroke-width="0.7" fill="none"/><ellipse cx="269.5" cy="721" rx="1.8" ry="2.2" stroke="#8a90c8" stroke-width="0.6" fill="none"/><path d="M339.3,656.5 L343.8,657.5 Q346.8,662.5 343.8,667.5 L339.3,668.5" stroke="#b8bcc0" stroke-width="0.7" fill="none"/><ellipse cx="342" cy="662.5" rx="1.8" ry="2.2" stroke="#8a90c8" stroke-width="0.6" fill="none"/><path d="M339.3,715 L343.8,716 Q346.8,721 343.8,726 L339.3,727" stroke="#b8bcc0" stroke-width="0.7" fill="none"/><ellipse cx="342" cy="721" rx="1.8" ry="2.2" stroke="#8a90c8" stroke-width="0.6" fill="none"/><ellipse cx="276.1" cy="659.6" rx="1.8" ry="2.4" stroke="#8a90c8" stroke-width="0.6" fill="none"/><ellipse cx="335.4" cy="659.6" rx="1.8" ry="2.4" stroke="#8a90c8" stroke-width="0.6" fill="none"/><ellipse cx="276.1" cy="683.8" rx="1.8" ry="2.4" stroke="#8a90c8" stroke-width="0.6" fill="none"/><ellipse cx="335.4" cy="683.8" rx="1.8" ry="2.4" stroke="#8a90c8" stroke-width="0.6" fill="none"/><ellipse cx="276.1" cy="707.2" rx="1.8" ry="2.4" stroke="#8a90c8" stroke-width="0.6" fill="none"/><ellipse cx="335.4" cy="707.2" rx="1.8" ry="2.4" stroke="#8a90c8" stroke-width="0.6" fill="none"/><ellipse cx="276.1" cy="729.9" rx="1.8" ry="2.4" stroke="#8a90c8" stroke-width="0.6" fill="none"/><ellipse cx="335.4" cy="729.9" rx="1.8" ry="2.4" stroke="#8a90c8" stroke-width="0.6" fill="none"/><ellipse cx="283" cy="750" rx="1.8" ry="2.4" stroke="#8a90c8" stroke-width="0.6" fill="none"/><ellipse cx="327.5" cy="750" rx="1.8" ry="2.4" stroke="#8a90c8" stroke-width="0.6" fill="none"/><rect x="290.1" y="659.6" width="30.4" height="17.2" rx="0" stroke="#b8bcc0" stroke-width="0.7" fill="none"/><ellipse cx="297.9" cy="669.8" rx="2.6" ry="3.4" stroke="#a0a8d0" stroke-width="0.6" fill="none"/><ellipse cx="305.7" cy="669.8" rx="2.6" ry="3.4" stroke="#a0a8d0" stroke-width="0.6" fill="none"/><ellipse cx="313.5" cy="669.8" rx="2.6" ry="3.4" stroke="#a0a8d0" stroke-width="0.6" fill="none"/><ellipse cx="305.7" cy="700.2" rx="9.4" ry="11.7" stroke="#8a90c8" stroke-width="0.8" fill="none"/><ellipse cx="305.7" cy="700.2" rx="7.8" ry="10" stroke="#8a90c8" stroke-width="0.5" fill="none"/><ellipse cx="305.7" cy="725.2" rx="8.6" ry="10.9" stroke="#8a90c8" stroke-width="0.8" fill="none"/><ellipse cx="297.9" cy="689.3" rx="1.3" ry="1.6" stroke="#9a9ac0" stroke-width="0.6" fill="none"/><ellipse cx="313.5" cy="689.3" rx="1.3" ry="1.6" stroke="#9a9ac0" stroke-width="0.6" fill="none"/><ellipse cx="297.9" cy="710.4" rx="1.3" ry="1.6" stroke="#9a9ac0" stroke-width="0.6" fill="none"/><ellipse cx="313.5" cy="710.4" rx="1.3" ry="1.6" stroke="#9a9ac0" stroke-width="0.6" fill="none"/><ellipse cx="297.9" cy="715.8" rx="1.3" ry="1.6" stroke="#9a9ac0" stroke-width="0.6" fill="none"/><ellipse cx="313.5" cy="715.8" rx="1.3" ry="1.6" stroke="#9a9ac0" stroke-width="0.6" fill="none"/><ellipse cx="297.9" cy="736" rx="1.3" ry="1.6" stroke="#9a9ac0" stroke-width="0.6" fill="none"/><ellipse cx="313.5" cy="736" rx="1.3" ry="1.6" stroke="#9a9ac0" stroke-width="0.6" fill="none"/><line x1="269" y1="650" x2="287" y2="665" stroke="#c8c828" stroke-width="0.6"/><rect x="267" y="648" width="6" height="4" stroke="#c8c828" stroke-width="0.5" fill="none"/><rect x="268" y="649" width="4" height="2" fill="#8a8a22"/><line x1="340" y1="649" x2="323" y2="665" stroke="#c8c828" stroke-width="0.6"/><rect x="337" y="648" width="5" height="3" stroke="#c8c828" stroke-width="0.5" fill="none"/><rect x="338" y="649" width="3" height="1" fill="#8a8a22"/><line x1="305" y1="645.6" x2="314.3" y2="645.6" stroke="#c8c828" stroke-width="0.6"/><line x1="309.5" y1="646" x2="309.5" y2="651.8" stroke="#c8c828" stroke-width="0.5"/><rect x="305" y="643" width="9" height="3" stroke="#c8c828" stroke-width="0.5" fill="none"/><rect x="306" y="644" width="7" height="1" fill="#8a8a22"/><path d="M325.5,635 L327,637.5 L331,632" stroke="#c8c828" stroke-width="0.6" fill="none"/><line x1="283" y1="700" x2="294" y2="687" stroke="#c8c828" stroke-width="0.6"/><rect x="283" y="690" width="7" height="7" stroke="#c8c828" stroke-width="0.5" fill="none"/><rect x="284" y="691" width="5" height="5" fill="#8a8a22"/><line x1="316" y1="689" x2="323" y2="684" stroke="#c8c828" stroke-width="0.6"/><rect x="318" y="684" width="7" height="4" stroke="#c8c828" stroke-width="0.5" fill="none"/><rect x="319" y="685" width="5" height="2" fill="#8a8a22"/><line x1="270" y1="750" x2="325" y2="684" stroke="#c8c828" stroke-width="0.6"/><line x1="283" y1="723.5" x2="325" y2="736" stroke="#c8c828" stroke-width="0.6"/><rect x="318" y="733" width="7" height="4" stroke="#c8c828" stroke-width="0.5" fill="none"/><rect x="319" y="734" width="5" height="2" fill="#8a8a22"/><line x1="293" y1="740" x2="299" y2="744" stroke="#c8c828" stroke-width="0.6"/><rect x="293" y="739.5" width="9" height="3.5" stroke="#c8c828" stroke-width="0.5" fill="none"/><rect x="294" y="740.5" width="7" height="1.5" fill="#8a8a22"/><line x1="323.6" y1="700" x2="344" y2="700" stroke="#c8c828" stroke-width="0.6"/><line x1="323.6" y1="700" x2="323.6" y2="725" stroke="#c8c828" stroke-width="0.6"/><line x1="323.6" y1="725" x2="340" y2="725" stroke="#c8c828" stroke-width="0.5"/><line x1="327" y1="715" x2="335" y2="705" stroke="#c8c828" stroke-width="0.6"/><line x1="337" y1="700" x2="344" y2="694" stroke="#c8c828" stroke-width="0.5"/><rect x="342.4" y="669" width="10.100000000000023" height="6.2000000000000455" stroke="#d8d830" stroke-width="0.5" fill="none"/><rect x="343.4" y="670" width="8.100000000000023" height="4.2000000000000455" fill="#8a8a22"/><line x1="333" y1="690" x2="344" y2="674" stroke="#c8c828" stroke-width="0.6"/><rect x="322" y="716" width="4" height="5" stroke="#c8c828" stroke-width="0.5" fill="none"/><rect x="323" y="717" width="2" height="3" fill="#8a8a22"/><rect x="329" y="712" width="4" height="4" stroke="#c8c828" stroke-width="0.5" fill="none"/><rect x="330" y="713" width="2" height="2" fill="#8a8a22"/><rect x="179" y="785.9" width="67.6" height="72.1" fill="#221c20" stroke="#b8bcc0" stroke-width="0.8"/><rect x="181" y="788" width="42" height="68" stroke="#5a2428" stroke-width="1.1" stroke-dasharray="1.5,0.8" fill="none"/><rect x="232" y="788" width="13" height="68" stroke="#5a2428" stroke-width="1.1" stroke-dasharray="1.5,0.8" fill="none"/><rect x="189.1" y="769" width="3.4" height="105.9" rx="0" stroke="#b8bcc0" stroke-width="0.7" fill="none"/><rect x="232" y="769" width="3.3" height="105.9" rx="0" stroke="#b8bcc0" stroke-width="0.7" fill="none"/><rect x="224" y="778" width="3.4" height="87.8" rx="0" stroke="#b8bcc0" stroke-width="0.7" fill="none"/><rect x="227.4" y="778" width="3.4" height="87.8" rx="0" stroke="#b8bcc0" stroke-width="0.7" fill="none"/><circle cx="201.5" cy="822" r="11.3" stroke="#b8bcc0" stroke-width="0.7" fill="none"/><circle cx="201.5" cy="822" r="8.3" stroke="#b8bcc0" stroke-width="0.6" fill="none"/><line x1="192" y1="812" x2="214" y2="836" stroke="#c8c828" stroke-width="0.7"/><line x1="222" y1="812" x2="206" y2="832" stroke="#c8c828" stroke-width="0.7"/><line x1="214" y1="820" x2="224" y2="812" stroke="#c8c828" stroke-width="0.6"/><rect x="208" y="826" width="7" height="7" stroke="#c8c828" stroke-width="0.5" fill="none"/><rect x="209" y="827" width="5" height="5" fill="#8a8a22"/><rect x="214" y="812" width="7" height="6" stroke="#c8c828" stroke-width="0.5" fill="none"/><rect x="215" y="813" width="5" height="4" fill="#8a8a22"/><rect x="236.4" y="800.5" width="6.8" height="42.8" rx="2" stroke="#b8bcc0" stroke-width="0.7" fill="none"/><circle cx="239.8" cy="820" r="1.5" stroke="#b8bcc0" stroke-width="0.6" fill="none"/><circle cx="236" cy="833" r="2.2" stroke="#b8bcc0" stroke-width="0.6" fill="none"/><circle cx="240" cy="835" r="2" stroke="#b8bcc0" stroke-width="0.6" fill="none"/><line x1="237" y1="813" x2="242" y2="806" stroke="#c8c828" stroke-width="0.7"/><line x1="238" y1="835" x2="243" y2="840" stroke="#c8c828" stroke-width="0.7"/><line x1="189.5" y1="796" x2="224" y2="796" stroke="#c8c828" stroke-width="0.6"/><path d="M191,796 l-1.5,-2 l3,0 z" fill="#c8c828"/><path d="M198,796 l-1.5,-2 l3,0 z" fill="#c8c828"/><path d="M206,796 l-1.5,-2 l3,0 z" fill="#c8c828"/><path d="M213,796 l-1.5,-2 l3,0 z" fill="#c8c828"/><path d="M221,796 l-1.5,-2 l3,0 z" fill="#c8c828"/><line x1="179" y1="807.3" x2="246.6" y2="807.3" stroke="#7c8092" stroke-width="0.8"/><line x1="179" y1="802.8" x2="246.6" y2="802.8" stroke="#1f1f48" stroke-width="1.4"/><rect x="364.8" y="784.8" width="48.4" height="21.4" rx="0" stroke="#c0c0c0" stroke-width="0.5" fill="none"/><line x1="364.8" y1="788" x2="386" y2="788" stroke="#d8d8d8" stroke-width="0.4"/><line x1="364.8" y1="791" x2="386" y2="791" stroke="#d8d8d8" stroke-width="0.4"/><line x1="364.8" y1="794" x2="386" y2="794" stroke="#d8d8d8" stroke-width="0.4"/><line x1="364.8" y1="797" x2="386" y2="797" stroke="#d8d8d8" stroke-width="0.4"/><line x1="364.8" y1="800" x2="386" y2="800" stroke="#d8d8d8" stroke-width="0.4"/><line x1="364.8" y1="803" x2="386" y2="803" stroke="#d8d8d8" stroke-width="0.4"/><line x1="368" y1="784.8" x2="368" y2="806.2" stroke="#d8d8d8" stroke-width="0.4"/><line x1="371" y1="784.8" x2="371" y2="806.2" stroke="#d8d8d8" stroke-width="0.4"/><line x1="374" y1="784.8" x2="374" y2="806.2" stroke="#d8d8d8" stroke-width="0.4"/><line x1="377" y1="784.8" x2="377" y2="806.2" stroke="#d8d8d8" stroke-width="0.4"/><line x1="380" y1="784.8" x2="380" y2="806.2" stroke="#d8d8d8" stroke-width="0.4"/><line x1="383" y1="784.8" x2="383" y2="806.2" stroke="#d8d8d8" stroke-width="0.4"/><line x1="386" y1="784.8" x2="386" y2="806.2" stroke="#d8d8d8" stroke-width="0.4"/><line x1="397" y1="784.8" x2="397" y2="806.2" stroke="#d8d8d8" stroke-width="0.4"/><rect x="365" y="793" width="21" height="2" fill="#c040d0" opacity="0.9"/><rect x="365" y="800" width="5" height="5" fill="#b040c0" opacity="0.7"/><rect x="386" y="797" width="11" height="5" fill="#c050c0" opacity="0.6"/><rect x="389" y="789" width="5" height="1.5" fill="#b02020"/><rect x="400" y="787" width="9" height="1.5" fill="#902030"/><rect x="400" y="794" width="9" height="1.5" fill="#902030"/><rect x="400" y="801" width="9" height="1.5" fill="#902030"/><line x1="397" y1="791" x2="413" y2="791" stroke="#c0c0c0" stroke-width="0.4"/><line x1="397" y1="798" x2="413" y2="798" stroke="#c0c0c0" stroke-width="0.4"/><rect x="305" y="803.8" width="0.8" height="0.8" fill="#a0a0a0"/><rect x="307" y="803.8" width="0.8" height="0.8" fill="#a0a0a0"/><rect x="309" y="803.8" width="0.8" height="0.8" fill="#a0a0a0"/><rect x="311" y="803.8" width="0.8" height="0.8" fill="#a0a0a0"/><line x1="284.9" y1="811.4" x2="313" y2="811.4" stroke="#2f8a8a" stroke-width="0.9" stroke-dasharray="1.6,0.5"/><line x1="284.9" y1="815.2" x2="302" y2="815.2" stroke="#2f8a8a" stroke-width="0.9" stroke-dasharray="1.6,0.5"/><line x1="284.9" y1="819.7" x2="339" y2="819.7" stroke="#2f8a8a" stroke-width="0.9" stroke-dasharray="1.6,0.5"/><line x1="284.9" y1="824.2" x2="318" y2="824.2" stroke="#2f8a8a" stroke-width="0.9" stroke-dasharray="1.6,0.5"/><line x1="284.9" y1="827.6" x2="320" y2="827.6" stroke="#2f8a8a" stroke-width="0.9" stroke-dasharray="1.6,0.5"/><line x1="284.9" y1="831.6" x2="308" y2="831.6" stroke="#2f8a8a" stroke-width="0.9" stroke-dasharray="1.6,0.5"/><line x1="284.9" y1="836.1" x2="301" y2="836.1" stroke="#2f8a8a" stroke-width="0.9" stroke-dasharray="1.6,0.5"/><rect x="299.5" y="823.3" width="6" height="1.8" fill="#30e0e0"/><rect x="312" y="823.3" width="7" height="1.8" fill="#30e0e0"/><rect x="285" y="823.3" width="1.6" height="1.8" fill="#e0e0e0"/><rect x="317.5" y="874.9" width="46.2" height="9" rx="0" stroke="#c0c0c0" stroke-width="0.45" fill="none"/><line x1="317.5" y1="877" x2="335" y2="877" stroke="#c8c8c8" stroke-width="0.35"/><line x1="317.5" y1="879.3" x2="335" y2="879.3" stroke="#c8c8c8" stroke-width="0.35"/><line x1="317.5" y1="881.6" x2="335" y2="881.6" stroke="#c8c8c8" stroke-width="0.35"/><line x1="321" y1="874.9" x2="321" y2="883.9" stroke="#c8c8c8" stroke-width="0.35"/><line x1="325.4" y1="874.9" x2="325.4" y2="883.9" stroke="#c8c8c8" stroke-width="0.35"/><line x1="331" y1="874.9" x2="331" y2="883.9" stroke="#c8c8c8" stroke-width="0.35"/><line x1="335" y1="874.9" x2="335" y2="883.9" stroke="#c8c8c8" stroke-width="0.35"/><line x1="345" y1="874.9" x2="345" y2="883.9" stroke="#c8c8c8" stroke-width="0.35"/><line x1="355" y1="874.9" x2="355" y2="883.9" stroke="#c8c8c8" stroke-width="0.35"/><rect x="325.4" y="875" width="5.6" height="8" fill="#e8e828"/><rect x="347.5" y="878" width="2.5" height="2.5" fill="#e8e8e8"/><line x1="335" y1="879" x2="363" y2="879" stroke="#c8c8c8" stroke-width="0.4"/></svg>
<svg style="left:675px;top:6px" width="431" height="286" viewBox="675 6 431 286"><rect x="675" y="6" width="431" height="286" fill="#1b1e22"/><rect x="741.5" y="7.5" width="298.5" height="283" rx="0" stroke="#6c7078" stroke-width="0.9" fill="none"/><rect x="743.5" y="9.5" width="294.5" height="279" rx="0" stroke="#25264a" stroke-width="0.8" fill="none"/><path d="M795.7,76.2 L809.5,76.2 L809.5,71.3 L828,71.3 L828,76.2 L845.2,76.2 L845.2,74.2 L866.4,74.2 L866.4,180.5 L794.5,180.5 L794.5,132 L795.7,132 Z" fill="#1f2423"/><rect x="795.7" y="105" width="70.7" height="12.3" fill="#2a4a2e"/><rect x="795.7" y="129.2" width="70.7" height="14" fill="#2a4a2e"/><rect x="795.7" y="76" width="3.3" height="104.5" fill="#2a4a2e"/><rect x="842" y="143" width="3" height="37" fill="#2a4a2e"/><rect x="810" y="76.5" width="12" height="13" fill="#22302a"/><path d="M795.7,76.2 L809.5,76.2 L809.5,71.3 L828,71.3 L828,76.2 L845.2,76.2 L845.2,106.6" stroke="#9ea59e" stroke-width="0.8" fill="none"/><line x1="795.7" y1="76.2" x2="795.7" y2="180.5" stroke="#9ea59e" stroke-width="0.8"/><rect x="845.2" y="74.2" width="21.2" height="38" rx="0" stroke="#9ea59e" stroke-width="0.8" fill="none"/><rect x="799" y="79.4" width="15" height="9.5" rx="0" stroke="#9ea59e" stroke-width="0.6" fill="#1a1c20"/><rect x="822" y="79.4" width="23.2" height="9.5" rx="0" stroke="#9ea59e" stroke-width="0.6" fill="#1a1c20"/><rect x="801.4" y="90" width="41.3" height="6" rx="0" stroke="#9ea59e" stroke-width="0.8" fill="#1a1c20"/><rect x="842.7" y="88" width="11.3" height="10" rx="0" stroke="#9ea59e" stroke-width="0.8" fill="#1a1c20"/><rect x="799" y="97.5" width="14" height="9" rx="0" stroke="#9ea59e" stroke-width="0.6" fill="#1a1c20"/><rect x="820" y="97.5" width="12" height="8" rx="0" stroke="#9ea59e" stroke-width="0.6" fill="#222a26"/><rect x="834" y="97.5" width="11" height="15" rx="0" stroke="#9ea59e" stroke-width="0.6" fill="#1a1c20"/><rect x="848" y="99" width="16" height="12" rx="0" stroke="#9ea59e" stroke-width="0.6" fill="#1a1c20"/><rect x="849.2" y="75.8" width="4.8" height="5.7" rx="2" stroke="#c8d0c0" stroke-width="0.7" fill="none"/><rect x="800" y="143.4" width="39.3" height="13.4" rx="0" stroke="#9ea59e" stroke-width="0.7" fill="#1a1c20"/><rect x="802" y="147.2" width="35" height="2.2" rx="0" stroke="#9ea59e" stroke-width="0.6" fill="none"/><rect x="802" y="151" width="35" height="2.2" rx="0" stroke="#9ea59e" stroke-width="0.6" fill="none"/><rect x="798.5" y="157.5" width="45" height="17" rx="0" stroke="#9ea59e" stroke-width="0.6" fill="#1a1c20"/><rect x="803" y="158" width="2.2" height="10" fill="#2f6a32"/><rect x="812" y="158" width="2.2" height="10" fill="#2f6a32"/><rect x="821" y="158" width="2.2" height="10" fill="#2f6a32"/><rect x="833" y="158" width="2.2" height="10" fill="#2f6a32"/><rect x="845" y="143" width="20" height="17" rx="0" stroke="#9ea59e" stroke-width="0.6" fill="#1a1c20"/><rect x="847.7" y="161.8" width="17.6" height="10.1" rx="0" stroke="#9ea59e" stroke-width="0.7" fill="#1a1c20"/><rect x="834" y="131" width="9" height="12" rx="0" stroke="#9ea59e" stroke-width="0.6" fill="#1a1c20"/><rect x="851.5" y="140" width="7" height="12" rx="0" stroke="#b0b8c0" stroke-width="0.5" fill="#20243a"/><rect x="851.5" y="140" width="7" height="1.5" fill="#c05050"/><line x1="794.5" y1="175.5" x2="866.4" y2="175.5" stroke="#9ea59e" stroke-width="0.7"/><line x1="794.5" y1="180.5" x2="866.4" y2="180.5" stroke="#9ea59e" stroke-width="0.8"/><line x1="794.5" y1="132" x2="866.4" y2="132" stroke="#9ea59e" stroke-width="0.7"/><rect x="850" y="174" width="13" height="5" fill="#3a9a3a"/><rect x="760.6" y="119" width="33.5" height="9.4" rx="0" stroke="#b9bdb9" stroke-width="0.8" fill="#1a1c20"/><rect x="768" y="118" width="9" height="11" rx="1.5" stroke="#b9bdb9" stroke-width="0.8" fill="none"/><rect x="796.5" y="117.3" width="107" height="12" fill="#1a1c20"/><rect x="801.7" y="117.5" width="5.0" height="11.7" rx="0" stroke="#9ea59e" stroke-width="0.9" fill="none"/><rect x="807.5" y="117.5" width="10.899999999999977" height="11.7" rx="0" stroke="#9ea59e" stroke-width="0.9" fill="none"/><rect x="819.2" y="117.5" width="6.7999999999999545" height="11.7" rx="0" stroke="#9ea59e" stroke-width="0.9" fill="none"/><rect x="826.8" y="117.5" width="5.0" height="11.7" rx="0" stroke="#9ea59e" stroke-width="0.9" fill="none"/><rect x="832.2" y="117.5" width="7.099999999999909" height="11.7" rx="0" stroke="#9ea59e" stroke-width="0.9" fill="none"/><rect x="839.8" y="117.5" width="7.100000000000023" height="11.7" rx="0" stroke="#9ea59e" stroke-width="0.9" fill="none"/><rect x="847.7" y="117.5" width="4.199999999999932" height="11.7" rx="0" stroke="#9ea59e" stroke-width="0.9" fill="none"/><rect x="851.9" y="117.5" width="8.300000000000068" height="11.7" rx="0" stroke="#9ea59e" stroke-width="0.9" fill="none"/><rect x="861" y="117.5" width="5" height="11.7" rx="0" stroke="#9ea59e" stroke-width="0.9" fill="none"/><rect x="866.5" y="117.5" width="9.5" height="11.7" rx="0" stroke="#9ea59e" stroke-width="0.9" fill="none"/><rect x="802" y="118.5" width="4" height="10" rx="1.8" stroke="#c8c8d0" stroke-width="0.8" fill="none"/><rect x="876" y="119.5" width="27.5" height="9" rx="0" stroke="#b9bdb9" stroke-width="0.8" fill="none"/><rect x="885" y="120" width="10" height="8" rx="0" stroke="#b9bdb9" stroke-width="0.7" fill="none"/><line x1="796.5" y1="117.3" x2="903.5" y2="117.3" stroke="#9ea59e" stroke-width="0.8"/><line x1="796.5" y1="129.2" x2="903.5" y2="129.2" stroke="#9ea59e" stroke-width="0.8"/><rect x="805.3" y="108" width="8.4" height="9" fill="#3d8a40"/><circle cx="809.5" cy="113.1" r="3.2" stroke="#60d060" stroke-width="0.9" fill="none"/><ellipse cx="809.5" cy="113.1" rx="1.3" ry="1.9" stroke="#e070e0" stroke-width="0" fill="#d060d0"/><rect x="805.3" y="129.5" width="8.4" height="9" fill="#3a7a3c"/><circle cx="809.5" cy="134.5" r="3.2" stroke="#60d060" stroke-width="0.9" fill="none"/><circle cx="809.5" cy="134.5" r="1.2" fill="#70e070"/><rect x="824.6999999999999" y="108" width="8.4" height="9" fill="#3d8a40"/><circle cx="828.9" cy="113.1" r="3.2" stroke="#60d060" stroke-width="0.9" fill="none"/><ellipse cx="828.9" cy="113.1" rx="1.3" ry="1.9" stroke="#e070e0" stroke-width="0" fill="#d060d0"/><rect x="824.6999999999999" y="129.5" width="8.4" height="9" fill="#3a7a3c"/><circle cx="828.9" cy="134.5" r="3.2" stroke="#60d060" stroke-width="0.9" fill="none"/><circle cx="828.9" cy="134.5" r="1.2" fill="#70e070"/><rect x="845.4" y="108" width="8.4" height="9" fill="#3d8a40"/><circle cx="849.6" cy="113.1" r="3.2" stroke="#60d060" stroke-width="0.9" fill="none"/><ellipse cx="849.6" cy="113.1" rx="1.3" ry="1.9" stroke="#e070e0" stroke-width="0" fill="#d060d0"/><rect x="845.4" y="129.5" width="8.4" height="9" fill="#3a7a3c"/><circle cx="849.6" cy="134.5" r="3.2" stroke="#60d060" stroke-width="0.9" fill="none"/><circle cx="849.6" cy="134.5" r="1.2" fill="#70e070"/><circle cx="797" cy="114" r="2.2" stroke="#70d870" stroke-width="0.9" fill="none"/><circle cx="797" cy="133" r="2.2" stroke="#70d870" stroke-width="0.9" fill="none"/><circle cx="866" cy="114" r="2.2" stroke="#70d870" stroke-width="0.9" fill="none"/><circle cx="866" cy="133" r="2.2" stroke="#70d870" stroke-width="0.9" fill="none"/><circle cx="797" cy="150" r="2.2" stroke="#70d870" stroke-width="0.9" fill="none"/><circle cx="797" cy="163" r="2.2" stroke="#70d870" stroke-width="0.9" fill="none"/><circle cx="866" cy="160" r="2.2" stroke="#70d870" stroke-width="0.9" fill="none"/><rect x="836" y="108" width="9" height="9" fill="#3a7a3a"/><rect x="815" y="108" width="8" height="9" fill="#2d5d30"/><path d="M832.2,73.4 Q836.6,67.5 841.1,73.4 Z" fill="#90e070"/><rect x="835.5" y="73" width="2.2" height="5.5" rx="0" stroke="#90e070" stroke-width="0.8" fill="none"/><ellipse cx="858.1" cy="84.7" rx="3.2" ry="4" stroke="#a040d0" stroke-width="0" fill="#b040d8"/><path d="M856,89 L864,91 L862,97 Z" fill="#50d050"/><rect x="808" y="168" width="6" height="6" rx="0" stroke="#a06060" stroke-width="0.6" fill="none"/><circle cx="817" cy="96.5" r="1.4" fill="#e8c040"/><circle cx="796.5" cy="113" r="2.4" fill="#d8c070"/><line x1="807.2" y1="35" x2="816" y2="78" stroke="#a9a93a" stroke-width="0.6"/><line x1="812.6" y1="35" x2="819" y2="86" stroke="#a9a93a" stroke-width="0.6"/><line x1="821.3" y1="35" x2="833" y2="69" stroke="#a9a93a" stroke-width="0.6"/><line x1="830.3" y1="35" x2="844" y2="76" stroke="#a9a93a" stroke-width="0.6"/><line x1="838.3" y1="35" x2="852" y2="74" stroke="#a9a93a" stroke-width="0.6"/><line x1="848.4" y1="35" x2="856" y2="72" stroke="#a9a93a" stroke-width="0.6"/><line x1="862.4" y1="35" x2="855" y2="73" stroke="#a9a93a" stroke-width="0.6"/><line x1="881.5" y1="35" x2="860" y2="76" stroke="#a9a93a" stroke-width="0.6"/><line x1="889.5" y1="35" x2="862" y2="80" stroke="#a9a93a" stroke-width="0.6"/><line x1="896.9" y1="35" x2="863" y2="86" stroke="#a9a93a" stroke-width="0.6"/><line x1="757" y1="55.1" x2="810" y2="75" stroke="#a9a93a" stroke-width="0.6"/><line x1="757" y1="60.1" x2="815" y2="80" stroke="#a9a93a" stroke-width="0.6"/><line x1="757" y1="65.2" x2="800" y2="82" stroke="#a9a93a" stroke-width="0.6"/><line x1="757" y1="71.2" x2="798" y2="90" stroke="#a9a93a" stroke-width="0.6"/><line x1="757" y1="80.2" x2="812" y2="100" stroke="#a9a93a" stroke-width="0.6"/><line x1="757" y1="85.2" x2="805" y2="110" stroke="#a9a93a" stroke-width="0.6"/><line x1="757" y1="89.8" x2="800" y2="113" stroke="#a9a93a" stroke-width="0.6"/><line x1="757" y1="93.2" x2="796" y2="115" stroke="#a9a93a" stroke-width="0.6"/><line x1="757" y1="97.3" x2="805" y2="118" stroke="#a9a93a" stroke-width="0.6"/><line x1="757" y1="101.3" x2="810" y2="122" stroke="#a9a93a" stroke-width="0.6"/><line x1="757" y1="105.3" x2="800" y2="124" stroke="#a9a93a" stroke-width="0.6"/><line x1="757" y1="108.3" x2="795" y2="120" stroke="#a9a93a" stroke-width="0.6"/><line x1="757" y1="115.3" x2="798" y2="126" stroke="#a9a93a" stroke-width="0.6"/><line x1="757" y1="136.4" x2="796" y2="140" stroke="#a9a93a" stroke-width="0.6"/><line x1="757" y1="156.5" x2="800" y2="150" stroke="#a9a93a" stroke-width="0.6"/><line x1="757.5" y1="160.0" x2="795.0" y2="116.0" stroke="#a8a838" stroke-width="0.55"/><line x1="757.5" y1="161.5" x2="797.5" y2="118.9" stroke="#a8a838" stroke-width="0.55"/><line x1="757.5" y1="163.0" x2="800.0" y2="121.8" stroke="#a8a838" stroke-width="0.55"/><line x1="757.5" y1="164.5" x2="795.0" y2="124.7" stroke="#a8a838" stroke-width="0.55"/><line x1="757.5" y1="166.0" x2="797.5" y2="127.6" stroke="#a8a838" stroke-width="0.55"/><line x1="757.5" y1="167.5" x2="800.0" y2="130.5" stroke="#a8a838" stroke-width="0.55"/><line x1="757.5" y1="169.0" x2="795.0" y2="133.4" stroke="#a8a838" stroke-width="0.55"/><line x1="757.5" y1="170.5" x2="797.5" y2="136.3" stroke="#a8a838" stroke-width="0.55"/><line x1="757.5" y1="172.0" x2="800.0" y2="139.2" stroke="#a8a838" stroke-width="0.55"/><line x1="757.5" y1="173.5" x2="795.0" y2="142.1" stroke="#a8a838" stroke-width="0.55"/><line x1="757.5" y1="175.0" x2="797.5" y2="145.0" stroke="#a8a838" stroke-width="0.55"/><line x1="757.5" y1="176.5" x2="800.0" y2="147.9" stroke="#a8a838" stroke-width="0.55"/><line x1="757.5" y1="178.0" x2="795.0" y2="150.8" stroke="#a8a838" stroke-width="0.55"/><line x1="757.5" y1="179.5" x2="797.5" y2="153.7" stroke="#a8a838" stroke-width="0.55"/><line x1="757.5" y1="181.0" x2="800.0" y2="156.6" stroke="#a8a838" stroke-width="0.55"/><line x1="757.5" y1="182.5" x2="795.0" y2="159.5" stroke="#a8a838" stroke-width="0.55"/><line x1="757.5" y1="184.0" x2="797.5" y2="162.4" stroke="#a8a838" stroke-width="0.55"/><line x1="757.5" y1="185.5" x2="800.0" y2="165.3" stroke="#a8a838" stroke-width="0.55"/><line x1="757.5" y1="187.0" x2="795.0" y2="168.2" stroke="#a8a838" stroke-width="0.55"/><line x1="757.5" y1="188.5" x2="797.5" y2="171.1" stroke="#a8a838" stroke-width="0.55"/><line x1="757.5" y1="190.0" x2="800.0" y2="174.0" stroke="#a8a838" stroke-width="0.55"/><line x1="757.5" y1="191.5" x2="795.0" y2="176.9" stroke="#a8a838" stroke-width="0.55"/><line x1="912.2" y1="53.1" x2="862" y2="90" stroke="#a9a93a" stroke-width="0.6"/><line x1="912.2" y1="61.1" x2="860" y2="95" stroke="#a9a93a" stroke-width="0.6"/><line x1="912.2" y1="68.2" x2="858" y2="100" stroke="#a9a93a" stroke-width="0.6"/><line x1="912.2" y1="74.2" x2="864" y2="104" stroke="#a9a93a" stroke-width="0.6"/><line x1="912.2" y1="80.2" x2="866" y2="108" stroke="#a9a93a" stroke-width="0.6"/><line x1="912.2" y1="85.2" x2="868" y2="110" stroke="#a9a93a" stroke-width="0.6"/><line x1="912.2" y1="89.2" x2="870" y2="112" stroke="#a9a93a" stroke-width="0.6"/><line x1="912.2" y1="93.2" x2="872" y2="114" stroke="#a9a93a" stroke-width="0.6"/><line x1="912.2" y1="97.3" x2="874" y2="116" stroke="#a9a93a" stroke-width="0.6"/><line x1="912.2" y1="102.3" x2="876" y2="118" stroke="#a9a93a" stroke-width="0.6"/><line x1="912.2" y1="107.3" x2="880" y2="120" stroke="#a9a93a" stroke-width="0.6"/><line x1="912.2" y1="111.3" x2="884" y2="122" stroke="#a9a93a" stroke-width="0.6"/><line x1="912.2" y1="128.4" x2="870" y2="124" stroke="#a9a93a" stroke-width="0.6"/><line x1="912.2" y1="135.4" x2="866" y2="130" stroke="#a9a93a" stroke-width="0.6"/><line x1="912.2" y1="140.4" x2="860" y2="138" stroke="#a9a93a" stroke-width="0.6"/><line x1="912.2" y1="144.4" x2="858" y2="144" stroke="#a9a93a" stroke-width="0.6"/><line x1="912.2" y1="149.4" x2="852" y2="148" stroke="#a9a93a" stroke-width="0.6"/><line x1="912.2" y1="153.5" x2="850" y2="152" stroke="#a9a93a" stroke-width="0.6"/><line x1="912.2" y1="158.5" x2="845" y2="156" stroke="#a9a93a" stroke-width="0.6"/><line x1="912.2" y1="166.5" x2="842" y2="162" stroke="#a9a93a" stroke-width="0.6"/><line x1="912.2" y1="180.5" x2="838" y2="172" stroke="#a9a93a" stroke-width="0.6"/><line x1="912.2" y1="197.6" x2="835" y2="180" stroke="#a9a93a" stroke-width="0.6"/><line x1="753" y1="73" x2="753" y2="193" stroke="#b0b040" stroke-width="0.7"/><line x1="757" y1="192.8" x2="905" y2="192.8" stroke="#c8c830" stroke-width="0.9"/><line x1="904.6" y1="115" x2="904.6" y2="193" stroke="#a0a040" stroke-width="0.6"/><line x1="760.6" y1="119" x2="760.6" y2="193" stroke="#8a8a50" stroke-width="0.6"/><line x1="753" y1="180.3" x2="905" y2="180.3" stroke="#a8a840" stroke-width="0.6"/><rect x="756.2" y="160" width="1.8" height="34" fill="#e0e020"/><line x1="818" y1="150" x2="807.3" y2="207.5" stroke="#a9a93a" stroke-width="0.6"/><circle cx="807.2" cy="35" r="1.2" fill="#e0e020"/><circle cx="812.6" cy="35" r="1.2" fill="#e0e020"/><circle cx="821.3" cy="35" r="1.2" fill="#e0e020"/><circle cx="830.3" cy="35" r="1.2" fill="#e0e020"/><circle cx="838.3" cy="35" r="1.2" fill="#e0e020"/><circle cx="848.4" cy="35" r="1.2" fill="#e0e020"/><circle cx="862.4" cy="35" r="1.2" fill="#e0e020"/><circle cx="881.5" cy="35" r="1.2" fill="#e0e020"/><circle cx="889.5" cy="35" r="1.2" fill="#e0e020"/><circle cx="896.9" cy="35" r="1.2" fill="#e0e020"/><circle cx="757" cy="55.1" r="1.2" fill="#e0e020"/><circle cx="757" cy="60.1" r="1.2" fill="#e0e020"/><circle cx="757" cy="65.2" r="1.2" fill="#e0e020"/><circle cx="757" cy="71.2" r="1.2" fill="#e0e020"/><circle cx="757" cy="80.2" r="1.2" fill="#e0e020"/><circle cx="757" cy="85.2" r="1.2" fill="#e0e020"/><circle cx="757" cy="89.8" r="1.2" fill="#e0e020"/><circle cx="757" cy="93.2" r="1.2" fill="#e0e020"/><circle cx="757" cy="97.3" r="1.2" fill="#e0e020"/><circle cx="757" cy="101.3" r="1.2" fill="#e0e020"/><circle cx="757" cy="105.3" r="1.2" fill="#e0e020"/><circle cx="757" cy="108.3" r="1.2" fill="#e0e020"/><circle cx="757" cy="115.3" r="1.2" fill="#e0e020"/><circle cx="757" cy="136.4" r="1.2" fill="#e0e020"/><circle cx="757" cy="156.5" r="1.2" fill="#e0e020"/><circle cx="912.2" cy="53.1" r="1.2" fill="#e0e020"/><circle cx="912.2" cy="61.1" r="1.2" fill="#e0e020"/><circle cx="912.2" cy="68.2" r="1.2" fill="#e0e020"/><circle cx="912.2" cy="74.2" r="1.2" fill="#e0e020"/><circle cx="912.2" cy="80.2" r="1.2" fill="#e0e020"/><circle cx="912.2" cy="85.2" r="1.2" fill="#e0e020"/><circle cx="912.2" cy="89.2" r="1.2" fill="#e0e020"/><circle cx="912.2" cy="93.2" r="1.2" fill="#e0e020"/><circle cx="912.2" cy="97.3" r="1.2" fill="#e0e020"/><circle cx="912.2" cy="102.3" r="1.2" fill="#e0e020"/><circle cx="912.2" cy="107.3" r="1.2" fill="#e0e020"/><circle cx="912.2" cy="111.3" r="1.2" fill="#e0e020"/><circle cx="912.2" cy="128.4" r="1.2" fill="#e0e020"/><circle cx="912.2" cy="135.4" r="1.2" fill="#e0e020"/><circle cx="912.2" cy="140.4" r="1.2" fill="#e0e020"/><circle cx="912.2" cy="144.4" r="1.2" fill="#e0e020"/><circle cx="912.2" cy="149.4" r="1.2" fill="#e0e020"/><circle cx="912.2" cy="153.5" r="1.2" fill="#e0e020"/><circle cx="912.2" cy="158.5" r="1.2" fill="#e0e020"/><circle cx="912.2" cy="166.5" r="1.2" fill="#e0e020"/><circle cx="912.2" cy="180.5" r="1.2" fill="#e0e020"/><circle cx="912.2" cy="197.6" r="1.2" fill="#e0e020"/><circle cx="807.3" cy="207.5" r="1.2" fill="#e0e020"/><rect x="843" y="206" width="18" height="5" rx="1" stroke="#b9bdb9" stroke-width="0.8" fill="none"/><rect x="843" y="216" width="17" height="5" rx="1" stroke="#b9bdb9" stroke-width="0.8" fill="none"/><rect x="846" y="227" width="19" height="5" rx="1" stroke="#b9bdb9" stroke-width="0.8" fill="none"/><path d="M856,203 L863,203 L863,238 L859,242 L856,238 Z" stroke="#b9bdb9" stroke-width="0.7" fill="none"/><rect x="856" y="212" width="4" height="10" rx="0" stroke="#50c050" stroke-width="0.7" fill="none"/><line x1="862" y1="214" x2="912.3" y2="229.5" stroke="#a9a93a" stroke-width="0.6"/><line x1="862" y1="222" x2="912.3" y2="234" stroke="#a9a93a" stroke-width="0.6"/><circle cx="912.3" cy="229.5" r="1.2" fill="#e0e020"/><circle cx="912.3" cy="234" r="1.2" fill="#e0e020"/><path d="M921,76.4 L935,76.4 L937,73 L950,73 L952,76.4 L965,76.4 Q969,76.4 969,80 L969,162 Q969,175.3 956,175.3 L930,175.3 Q917,175.3 917,162 L917,81 Q917,76.4 921,76.4 Z" stroke="#3d8a4a" stroke-width="1.1" fill="none"/><rect x="920.5" y="80.5" width="45" height="92" rx="10" stroke="#3a7a44" stroke-width="0.8" fill="none"/><rect x="938.8" y="69" width="9.7" height="4.5" rx="1" stroke="#70d060" stroke-width="0.8" fill="#50b050"/><ellipse cx="934.8" cy="92.5" rx="2.9" ry="3.6" stroke="#60e060" stroke-width="0.8" fill="#40c040"/><ellipse cx="942.8" cy="92.5" rx="2.9" ry="3.6" stroke="#60e060" stroke-width="0.8" fill="#40c040"/><ellipse cx="951.4" cy="92.5" rx="2.9" ry="3.6" stroke="#60e060" stroke-width="0.8" fill="#40c040"/><rect x="936" y="88" width="18" height="3" rx="0" stroke="#c0c0c0" stroke-width="0.5" fill="none"/><circle cx="943.3" cy="123.3" r="13.7" stroke="#7888b8" stroke-width="1.0" fill="none"/><circle cx="943.3" cy="123.3" r="11.5" stroke="#3f9f4f" stroke-width="2.5" fill="none"/><circle cx="943.3" cy="127" r="9" fill="#2a6a35"/><ellipse cx="943.3" cy="124" rx="4.5" ry="5" stroke="#d0e8b0" stroke-width="0.9" fill="#3a8a40"/><circle cx="929.9" cy="145.9" r="8.9" stroke="#5a6ab0" stroke-width="1.1" fill="none"/><circle cx="929.9" cy="145.9" r="6.5" stroke="#3f8f4f" stroke-width="1.8" fill="none"/><circle cx="929.9" cy="145.9" r="4.2" stroke="#d0e8c0" stroke-width="0.9" fill="none"/><circle cx="943.3" cy="148.3" r="6" stroke="#5a6ab0" stroke-width="1.0" fill="none"/><circle cx="943.3" cy="149" r="4.6" fill="#3a9a45"/><line x1="960" y1="95" x2="960" y2="160" stroke="#a0a040" stroke-width="0.6"/><rect x="928" y="156" width="13" height="13" rx="0" stroke="#a0a040" stroke-width="0.6" fill="none"/><line x1="925" y1="138" x2="928" y2="123" stroke="#a0a040" stroke-width="0.6"/><path d="M972,120 L977,125 L957,160 L952,156 Z" stroke="#c0c0c0" stroke-width="0.7" fill="none"/><path d="M971,120 L976,124 L979,121 L974,117 Z" fill="#70d060"/><line x1="954.6" y1="55.4" x2="940" y2="90" stroke="#a9a93a" stroke-width="0.6"/><circle cx="954.6" cy="55.4" r="1.2" fill="#e0e020"/><line x1="961.4" y1="55.4" x2="946" y2="90" stroke="#a9a93a" stroke-width="0.6"/><circle cx="961.4" cy="55.4" r="1.2" fill="#e0e020"/><line x1="969.2" y1="55.4" x2="950" y2="90" stroke="#a9a93a" stroke-width="0.6"/><circle cx="969.2" cy="55.4" r="1.2" fill="#e0e020"/><line x1="979.2" y1="55.4" x2="975" y2="120" stroke="#a9a93a" stroke-width="0.6"/><circle cx="979.2" cy="55.4" r="1.2" fill="#e0e020"/><line x1="969.3" y1="77" x2="969.3" y2="189.4" stroke="#a0a040" stroke-width="0.7"/><line x1="916.5" y1="120" x2="916.5" y2="189.4" stroke="#a0a040" stroke-width="0.7"/><line x1="916.5" y1="189.4" x2="969.3" y2="189.4" stroke="#b0b040" stroke-width="0.8"/><circle cx="942.5" cy="189.4" r="1.2" fill="#c8c840"/><rect x="948" y="206" width="8" height="3" fill="#30b030"/><line x1="928" y1="218.0" x2="976" y2="218.0" stroke="#2a7a38" stroke-width="0.9" stroke-dasharray="1.6,0.7"/><line x1="928" y1="221.6" x2="970" y2="221.6" stroke="#2a7a38" stroke-width="0.9" stroke-dasharray="1.6,0.7"/><line x1="928" y1="225.2" x2="968" y2="225.2" stroke="#2a7a38" stroke-width="0.9" stroke-dasharray="1.6,0.7"/><line x1="928" y1="228.8" x2="950" y2="228.8" stroke="#2a7a38" stroke-width="0.9" stroke-dasharray="1.6,0.7"/><line x1="928" y1="232.4" x2="958" y2="232.4" stroke="#2a7a38" stroke-width="0.9" stroke-dasharray="1.6,0.7"/><line x1="928" y1="236.0" x2="953" y2="236.0" stroke="#2a7a38" stroke-width="0.9" stroke-dasharray="1.6,0.7"/><line x1="928" y1="239.6" x2="976" y2="239.6" stroke="#2a7a38" stroke-width="0.9" stroke-dasharray="1.6,0.7"/><line x1="928" y1="243.2" x2="943" y2="243.2" stroke="#2a7a38" stroke-width="0.9" stroke-dasharray="1.6,0.7"/><rect x="992.5" y="100.8" width="46" height="187.9" fill="#34341f"/><rect x="992.1" y="100.8" width="2.4" height="166.8" fill="#e0e020"/><line x1="994.4" y1="100.8" x2="1038.5" y2="100.8" stroke="#c0c03a" stroke-width="0.55"/><line x1="994.4" y1="103.44761904761904" x2="1038.5" y2="103.44761904761904" stroke="#c0c03a" stroke-width="0.55"/><line x1="994.4" y1="106.09523809523809" x2="1038.5" y2="106.09523809523809" stroke="#c0c03a" stroke-width="0.55"/><line x1="994.4" y1="108.74285714285715" x2="1038.5" y2="108.74285714285715" stroke="#c0c03a" stroke-width="0.55"/><line x1="994.4" y1="111.39047619047619" x2="1038.5" y2="111.39047619047619" stroke="#c0c03a" stroke-width="0.55"/><line x1="994.4" y1="114.03809523809524" x2="1038.5" y2="114.03809523809524" stroke="#c0c03a" stroke-width="0.55"/><line x1="994.4" y1="116.68571428571428" x2="1038.5" y2="116.68571428571428" stroke="#c0c03a" stroke-width="0.55"/><line x1="994.4" y1="119.33333333333333" x2="1038.5" y2="119.33333333333333" stroke="#c0c03a" stroke-width="0.55"/><line x1="994.4" y1="121.98095238095237" x2="1038.5" y2="121.98095238095237" stroke="#c0c03a" stroke-width="0.55"/><line x1="994.4" y1="124.62857142857143" x2="1038.5" y2="124.62857142857143" stroke="#c0c03a" stroke-width="0.55"/><line x1="994.4" y1="127.27619047619048" x2="1038.5" y2="127.27619047619048" stroke="#c0c03a" stroke-width="0.55"/><line x1="994.4" y1="129.92380952380952" x2="1038.5" y2="129.92380952380952" stroke="#c0c03a" stroke-width="0.55"/><line x1="994.4" y1="132.57142857142858" x2="1038.5" y2="132.57142857142858" stroke="#c0c03a" stroke-width="0.55"/><line x1="994.4" y1="135.21904761904761" x2="1038.5" y2="135.21904761904761" stroke="#c0c03a" stroke-width="0.55"/><line x1="994.4" y1="137.86666666666667" x2="1038.5" y2="137.86666666666667" stroke="#c0c03a" stroke-width="0.55"/><line x1="994.4" y1="140.51428571428573" x2="1038.5" y2="140.51428571428573" stroke="#c0c03a" stroke-width="0.55"/><line x1="994.4" y1="143.16190476190476" x2="1038.5" y2="143.16190476190476" stroke="#c0c03a" stroke-width="0.55"/><line x1="994.4" y1="145.8095238095238" x2="1038.5" y2="145.8095238095238" stroke="#c0c03a" stroke-width="0.55"/><line x1="994.4" y1="148.45714285714286" x2="1038.5" y2="148.45714285714286" stroke="#c0c03a" stroke-width="0.55"/><line x1="994.4" y1="151.10476190476192" x2="1038.5" y2="151.10476190476192" stroke="#c0c03a" stroke-width="0.55"/><line x1="994.4" y1="153.75238095238097" x2="1038.5" y2="153.75238095238097" stroke="#c0c03a" stroke-width="0.55"/><line x1="994.4" y1="156.4" x2="1038.5" y2="156.4" stroke="#c0c03a" stroke-width="0.55"/><line x1="994.4" y1="159.04761904761904" x2="1038.5" y2="159.04761904761904" stroke="#c0c03a" stroke-width="0.55"/><line x1="994.4" y1="161.6952380952381" x2="1038.5" y2="161.6952380952381" stroke="#c0c03a" stroke-width="0.55"/><line x1="994.4" y1="164.34285714285716" x2="1038.5" y2="164.34285714285716" stroke="#c0c03a" stroke-width="0.55"/><line x1="994.4" y1="166.99047619047622" x2="1038.5" y2="166.99047619047622" stroke="#c0c03a" stroke-width="0.55"/><line x1="994.4" y1="169.63809523809525" x2="1038.5" y2="169.63809523809525" stroke="#c0c03a" stroke-width="0.55"/><line x1="994.4" y1="172.28571428571428" x2="1038.5" y2="172.28571428571428" stroke="#c0c03a" stroke-width="0.55"/><line x1="994.4" y1="174.93333333333334" x2="1038.5" y2="174.93333333333334" stroke="#c0c03a" stroke-width="0.55"/><line x1="994.4" y1="177.5809523809524" x2="1038.5" y2="177.5809523809524" stroke="#c0c03a" stroke-width="0.55"/><line x1="994.4" y1="180.22857142857146" x2="1038.5" y2="180.22857142857146" stroke="#c0c03a" stroke-width="0.55"/><line x1="994.4" y1="182.8761904761905" x2="1038.5" y2="182.8761904761905" stroke="#c0c03a" stroke-width="0.55"/><line x1="994.4" y1="185.52380952380952" x2="1038.5" y2="185.52380952380952" stroke="#c0c03a" stroke-width="0.55"/><line x1="994.4" y1="188.17142857142858" x2="1038.5" y2="188.17142857142858" stroke="#c0c03a" stroke-width="0.55"/><line x1="994.4" y1="190.81904761904764" x2="1038.5" y2="190.81904761904764" stroke="#c0c03a" stroke-width="0.55"/><line x1="994.4" y1="193.4666666666667" x2="1038.5" y2="193.4666666666667" stroke="#c0c03a" stroke-width="0.55"/><line x1="994.4" y1="196.11428571428573" x2="1038.5" y2="196.11428571428573" stroke="#c0c03a" stroke-width="0.55"/><line x1="994.4" y1="198.76190476190476" x2="1038.5" y2="198.76190476190476" stroke="#c0c03a" stroke-width="0.55"/><line x1="994.4" y1="201.40952380952382" x2="1038.5" y2="201.40952380952382" stroke="#c0c03a" stroke-width="0.55"/><line x1="994.4" y1="204.05714285714288" x2="1038.5" y2="204.05714285714288" stroke="#c0c03a" stroke-width="0.55"/><line x1="994.4" y1="206.70476190476194" x2="1038.5" y2="206.70476190476194" stroke="#c0c03a" stroke-width="0.55"/><line x1="994.4" y1="209.35238095238097" x2="1038.5" y2="209.35238095238097" stroke="#c0c03a" stroke-width="0.55"/><line x1="994.4" y1="212.0" x2="1038.5" y2="212.0" stroke="#c0c03a" stroke-width="0.55"/><line x1="994.4" y1="214.64761904761906" x2="1038.5" y2="214.64761904761906" stroke="#c0c03a" stroke-width="0.55"/><line x1="994.4" y1="217.29523809523812" x2="1038.5" y2="217.29523809523812" stroke="#c0c03a" stroke-width="0.55"/><line x1="994.4" y1="219.94285714285715" x2="1038.5" y2="219.94285714285715" stroke="#c0c03a" stroke-width="0.55"/><line x1="994.4" y1="222.5904761904762" x2="1038.5" y2="222.5904761904762" stroke="#c0c03a" stroke-width="0.55"/><line x1="994.4" y1="225.23809523809524" x2="1038.5" y2="225.23809523809524" stroke="#c0c03a" stroke-width="0.55"/><line x1="994.4" y1="227.8857142857143" x2="1038.5" y2="227.8857142857143" stroke="#c0c03a" stroke-width="0.55"/><line x1="994.4" y1="230.53333333333336" x2="1038.5" y2="230.53333333333336" stroke="#c0c03a" stroke-width="0.55"/><line x1="994.4" y1="233.18095238095242" x2="1038.5" y2="233.18095238095242" stroke="#c0c03a" stroke-width="0.55"/><line x1="994.4" y1="235.82857142857142" x2="1038.5" y2="235.82857142857142" stroke="#c0c03a" stroke-width="0.55"/><line x1="994.4" y1="238.47619047619048" x2="1038.5" y2="238.47619047619048" stroke="#c0c03a" stroke-width="0.55"/><line x1="994.4" y1="241.12380952380954" x2="1038.5" y2="241.12380952380954" stroke="#c0c03a" stroke-width="0.55"/><line x1="994.4" y1="243.7714285714286" x2="1038.5" y2="243.7714285714286" stroke="#c0c03a" stroke-width="0.55"/><line x1="994.4" y1="246.41904761904766" x2="1038.5" y2="246.41904761904766" stroke="#c0c03a" stroke-width="0.55"/><line x1="994.4" y1="249.06666666666666" x2="1038.5" y2="249.06666666666666" stroke="#c0c03a" stroke-width="0.55"/><line x1="994.4" y1="251.71428571428572" x2="1038.5" y2="251.71428571428572" stroke="#c0c03a" stroke-width="0.55"/><line x1="994.4" y1="254.36190476190478" x2="1038.5" y2="254.36190476190478" stroke="#c0c03a" stroke-width="0.55"/><line x1="994.4" y1="257.00952380952384" x2="1038.5" y2="257.00952380952384" stroke="#c0c03a" stroke-width="0.55"/><line x1="994.4" y1="259.6571428571429" x2="1038.5" y2="259.6571428571429" stroke="#c0c03a" stroke-width="0.55"/><line x1="994.4" y1="262.3047619047619" x2="1038.5" y2="262.3047619047619" stroke="#c0c03a" stroke-width="0.55"/><line x1="994.4" y1="264.95238095238096" x2="1038.5" y2="264.95238095238096" stroke="#c0c03a" stroke-width="0.55"/><line x1="994.4" y1="267.6" x2="1038.5" y2="267.6" stroke="#c0c03a" stroke-width="0.55"/><line x1="994.4" y1="100.8" x2="994.4" y2="267.6" stroke="#c0c03a" stroke-width="0.55"/><line x1="1005.5" y1="100.8" x2="1005.5" y2="267.6" stroke="#c0c03a" stroke-width="0.55"/><line x1="1016.2" y1="100.8" x2="1016.2" y2="267.6" stroke="#c0c03a" stroke-width="0.55"/><line x1="1018" y1="100.8" x2="1018" y2="267.6" stroke="#c0c03a" stroke-width="0.55"/><line x1="1028.7" y1="100.8" x2="1028.7" y2="267.6" stroke="#c0c03a" stroke-width="0.55"/><line x1="1038.5" y1="100.8" x2="1038.5" y2="267.6" stroke="#c0c03a" stroke-width="0.55"/><rect x="1018.4" y="134.2" width="10.3" height="2.2" fill="#e8e828"/><rect x="1018.4" y="139.6" width="10.3" height="2.2" fill="#e8e828"/><rect x="1018.4" y="250.7" width="10.3" height="4.6" fill="#e8e828"/><rect x="992.5" y="268.6" width="46" height="20.1" fill="#22232a" stroke="#b8b8a0" stroke-width="0.5"/><line x1="992.5" y1="272" x2="1012.5" y2="272" stroke="#b8b890" stroke-width="0.45"/><line x1="992.5" y1="275.5" x2="1012.5" y2="275.5" stroke="#b8b890" stroke-width="0.45"/><line x1="992.5" y1="279" x2="1012.5" y2="279" stroke="#b8b890" stroke-width="0.45"/><line x1="992.5" y1="282.5" x2="1012.5" y2="282.5" stroke="#b8b890" stroke-width="0.45"/><line x1="992.5" y1="286" x2="1012.5" y2="286" stroke="#b8b890" stroke-width="0.45"/><line x1="993.2" y1="268.6" x2="993.2" y2="288.7" stroke="#b8b890" stroke-width="0.45"/><line x1="999.6" y1="268.6" x2="999.6" y2="288.7" stroke="#b8b890" stroke-width="0.45"/><line x1="1005.1" y1="268.6" x2="1005.1" y2="288.7" stroke="#b8b890" stroke-width="0.45"/><line x1="1008.8" y1="268.6" x2="1008.8" y2="288.7" stroke="#b8b890" stroke-width="0.45"/><line x1="1012.5" y1="268.6" x2="1012.5" y2="288.7" stroke="#b8b890" stroke-width="0.45"/><line x1="1025.3" y1="268.6" x2="1025.3" y2="288.7" stroke="#b8b890" stroke-width="0.45"/><line x1="1038.1" y1="268.6" x2="1038.1" y2="288.7" stroke="#b8b890" stroke-width="0.45"/><line x1="1012.5" y1="275" x2="1038.5" y2="275" stroke="#a0a0a0" stroke-width="0.45"/><line x1="1012.5" y1="282" x2="1038.5" y2="282" stroke="#a0a0a0" stroke-width="0.45"/><rect x="999.6" y="280" width="5.5" height="6" fill="#e8e828"/><rect x="1022.5" y="282.4" width="1.8" height="1.8" fill="#e8e8c0"/><line x1="741.5" y1="288.9" x2="1039" y2="288.9" stroke="#26285a" stroke-width="1.2"/></svg>
<svg style="left:675px;top:304px" width="431" height="286" viewBox="675 304 431 286"><rect x="675" y="304" width="431" height="286" fill="#1b1e22"/><path d="M764.4,300 L764.4,508.4 L1063.6,508.4 L1063.6,300" stroke="#a8a8a8" stroke-width="0.8" fill="none"/><path d="M773.2,300 L773.2,504 L1060.8,504 L1060.8,300" stroke="#1414e8" stroke-width="2.6" fill="none"/><rect x="741.6" y="305" width="299" height="290" stroke="#a8a8a8" stroke-width="0.8" fill="none"/><rect x="750.5" y="310.6" width="287.4" height="274.6" stroke="#1414e8" stroke-width="2.2" fill="none"/><line x1="891.2" y1="304" x2="891.2" y2="311" stroke="#1414e8" stroke-width="1.6"/><line x1="891.2" y1="585" x2="891.2" y2="590" stroke="#1414e8" stroke-width="1.6"/><line x1="764" y1="366.5" x2="773" y2="366.5" stroke="#1414e8" stroke-width="1.8"/><line x1="1060" y1="366" x2="1064" y2="366" stroke="#1414e8" stroke-width="1.8"/><line x1="741.7" y1="447.5" x2="750.5" y2="447.5" stroke="#1414e8" stroke-width="1.8"/><line x1="914" y1="504" x2="914" y2="508.5" stroke="#1414e8" stroke-width="1.6"/><line x1="1038" y1="447" x2="1041" y2="447" stroke="#1414e8" stroke-width="1.6"/><circle cx="742.6" cy="306" r="2.6" fill="#2a2aff"/><circle cx="1038.2" cy="306" r="2.6" fill="#2a2aff"/><circle cx="765.6" cy="505.7" r="2.4" fill="#2a2aff"/><circle cx="1061.5" cy="505.8" r="3.3" fill="#2a2aff"/><circle cx="741.6" cy="587" r="2.6" fill="#2a2aff"/><circle cx="1038.4" cy="585.6" r="2.6" fill="#2a2aff"/><line x1="800.9" y1="434.6" x2="973.9" y2="434.6" stroke="#b0b0b0" stroke-width="0.5"/><rect x="817.4000000000001" y="429.4" width="5.199999999999909" height="10.1" fill="#2a2a1c"/><line x1="818.86" y1="429.2" x2="818.86" y2="439.7" stroke="#9a9a30" stroke-width="0.7"/><line x1="821.14" y1="429.2" x2="821.14" y2="439.7" stroke="#9a9a30" stroke-width="0.7"/><rect x="825.0" y="427.8" width="14.50000000000009" height="13.299999999999988" fill="#2a2a1c"/><line x1="829.715" y1="427.6" x2="829.715" y2="441.3" stroke="#9a9a30" stroke-width="0.7"/><line x1="834.785" y1="427.6" x2="834.785" y2="441.3" stroke="#9a9a30" stroke-width="0.7"/><rect x="841.9000000000001" y="426.3" width="9.799999999999931" height="16.29999999999999" fill="#2a2a1c"/><line x1="844.97" y1="426.1" x2="844.97" y2="442.8" stroke="#9a9a30" stroke-width="0.7"/><line x1="848.63" y1="426.1" x2="848.63" y2="442.8" stroke="#9a9a30" stroke-width="0.7"/><rect x="854.1" y="425.2" width="5.200000000000022" height="18.6" fill="#2a2a1c"/><line x1="855.56" y1="425" x2="855.56" y2="444" stroke="#9a9a30" stroke-width="0.7"/><line x1="857.84" y1="425" x2="857.84" y2="444" stroke="#9a9a30" stroke-width="0.7"/><rect x="861.7" y="426.59999999999997" width="6.899999999999954" height="16.000000000000036" fill="#2a2a1c"/><line x1="863.755" y1="426.4" x2="863.755" y2="442.8" stroke="#9a9a30" stroke-width="0.7"/><line x1="866.545" y1="426.4" x2="866.545" y2="442.8" stroke="#9a9a30" stroke-width="0.7"/><rect x="871.0" y="426.59999999999997" width="8.300000000000045" height="16.000000000000036" fill="#2a2a1c"/><line x1="873.545" y1="426.4" x2="873.545" y2="442.8" stroke="#9a9a30" stroke-width="0.7"/><line x1="876.755" y1="426.4" x2="876.755" y2="442.8" stroke="#9a9a30" stroke-width="0.7"/><rect x="881.7" y="425.7" width="5.200000000000022" height="17.79999999999999" fill="#2a2a1c"/><line x1="883.16" y1="425.5" x2="883.16" y2="443.7" stroke="#9a9a30" stroke-width="0.7"/><line x1="885.44" y1="425.5" x2="885.44" y2="443.7" stroke="#9a9a30" stroke-width="0.7"/><rect x="889.3000000000001" y="427.2" width="9.899999999999954" height="14.499999999999977" fill="#2a2a1c"/><line x1="892.405" y1="427" x2="892.405" y2="441.9" stroke="#9a9a30" stroke-width="0.7"/><line x1="896.095" y1="427" x2="896.095" y2="441.9" stroke="#9a9a30" stroke-width="0.7"/><rect x="901.6" y="428.2" width="5.200000000000022" height="12.6" fill="#2a2a1c"/><line x1="903.06" y1="428" x2="903.06" y2="441" stroke="#9a9a30" stroke-width="0.7"/><line x1="905.34" y1="428" x2="905.34" y2="441" stroke="#9a9a30" stroke-width="0.7"/><rect x="909.2" y="429.4" width="9.899999999999954" height="10.1" fill="#2a2a1c"/><line x1="912.305" y1="429.2" x2="912.305" y2="439.7" stroke="#9a9a30" stroke-width="0.7"/><line x1="915.995" y1="429.2" x2="915.995" y2="439.7" stroke="#9a9a30" stroke-width="0.7"/><rect x="921.5" y="428.2" width="16.000000000000092" height="12.6" fill="#2a2a1c"/><line x1="926.74" y1="428" x2="926.74" y2="441" stroke="#9a9a30" stroke-width="0.7"/><line x1="932.26" y1="428" x2="932.26" y2="441" stroke="#9a9a30" stroke-width="0.7"/><rect x="939.9000000000001" y="429.7" width="12.899999999999954" height="9.499999999999977" fill="#2a2a1c"/><line x1="944.0550000000001" y1="429.5" x2="944.0550000000001" y2="439.4" stroke="#9a9a30" stroke-width="0.7"/><line x1="948.645" y1="429.5" x2="948.645" y2="439.4" stroke="#9a9a30" stroke-width="0.7"/><rect x="955.2" y="431.8" width="6.800000000000045" height="5.899999999999954" fill="#2a2a1c"/><line x1="957.22" y1="431.6" x2="957.22" y2="437.9" stroke="#9a9a30" stroke-width="0.7"/><line x1="959.98" y1="431.6" x2="959.98" y2="437.9" stroke="#9a9a30" stroke-width="0.7"/><rect x="816.2" y="428.2" width="7.599999999999909" height="12.5" rx="0" stroke="#f0f0f0" stroke-width="1.6" fill="none"/><rect x="823.8" y="426.6" width="16.90000000000009" height="15.699999999999989" rx="0" stroke="#f0f0f0" stroke-width="1.6" fill="none"/><rect x="840.7" y="425.1" width="12.199999999999932" height="18.69999999999999" rx="0" stroke="#f0f0f0" stroke-width="1.6" fill="none"/><rect x="852.9" y="424" width="7.600000000000023" height="21" rx="0" stroke="#f0f0f0" stroke-width="1.6" fill="none"/><rect x="860.5" y="425.4" width="9.299999999999955" height="18.400000000000034" rx="0" stroke="#f0f0f0" stroke-width="1.6" fill="none"/><rect x="869.8" y="425.4" width="10.700000000000045" height="18.400000000000034" rx="0" stroke="#f0f0f0" stroke-width="1.6" fill="none"/><rect x="880.5" y="424.5" width="7.600000000000023" height="20.19999999999999" rx="0" stroke="#f0f0f0" stroke-width="1.6" fill="none"/><rect x="888.1" y="426" width="12.299999999999955" height="16.899999999999977" rx="0" stroke="#f0f0f0" stroke-width="1.6" fill="none"/><rect x="900.4" y="427" width="7.600000000000023" height="15" rx="0" stroke="#f0f0f0" stroke-width="1.6" fill="none"/><rect x="908" y="428.2" width="12.299999999999955" height="12.5" rx="0" stroke="#f0f0f0" stroke-width="1.6" fill="none"/><rect x="920.3" y="427" width="18.40000000000009" height="15" rx="0" stroke="#f0f0f0" stroke-width="1.6" fill="none"/><rect x="938.7" y="428.5" width="15.299999999999955" height="11.899999999999977" rx="0" stroke="#f0f0f0" stroke-width="1.6" fill="none"/><rect x="954" y="430.6" width="9.200000000000045" height="8.299999999999955" rx="0" stroke="#f0f0f0" stroke-width="1.6" fill="none"/><line x1="869.8" y1="422.5" x2="869.8" y2="446.8" stroke="#f0f0f0" stroke-width="1.6"/><circle cx="928" cy="434.6" r="3" stroke="#f0f0f0" stroke-width="1.4" fill="none"/><path d="M927,420 L927,417 L930,417" stroke="#f0f0f0" stroke-width="1.2" fill="none"/><path d="M927,449 L927,452 L930,452" stroke="#f0f0f0" stroke-width="1.2" fill="none"/><rect x="825.4" y="407.7" width="15.300000000000068" height="4.600000000000023" stroke="#c8c830" stroke-width="0.7" fill="none"/><line x1="827.4" y1="410.0" x2="838.7" y2="410.0" stroke="#8a8a28" stroke-width="1.6"/><rect x="849.9" y="407.7" width="16.800000000000068" height="4.600000000000023" stroke="#c8c830" stroke-width="0.7" fill="none"/><line x1="851.9" y1="410.0" x2="864.7" y2="410.0" stroke="#8a8a28" stroke-width="1.6"/><rect x="874.4" y="407.7" width="15.300000000000068" height="4.600000000000023" stroke="#c8c830" stroke-width="0.7" fill="none"/><line x1="876.4" y1="410.0" x2="887.7" y2="410.0" stroke="#8a8a28" stroke-width="1.6"/><rect x="949.4" y="413.8" width="19.899999999999977" height="5.199999999999989" stroke="#c8c830" stroke-width="0.7" fill="none"/><line x1="951.4" y1="416.4" x2="967.3" y2="416.4" stroke="#8a8a28" stroke-width="1.6"/><rect x="909.6" y="465" width="16.799999999999955" height="4.5" stroke="#c8c830" stroke-width="0.7" fill="none"/><line x1="911.6" y1="467.25" x2="924.4" y2="467.25" stroke="#8a8a28" stroke-width="1.6"/><rect x="900" y="416" width="15" height="7" stroke="#c8c830" stroke-width="0.7" fill="none"/><line x1="902" y1="419.5" x2="913" y2="419.5" stroke="#8a8a28" stroke-width="1.6"/><line x1="843" y1="410" x2="848" y2="410" stroke="#c8c830" stroke-width="0.5"/><line x1="867" y1="410" x2="874" y2="410" stroke="#c8c830" stroke-width="0.5"/><line x1="869.8" y1="404" x2="869.8" y2="422" stroke="#c8c830" stroke-width="0.6"/><line x1="849" y1="412" x2="856" y2="425" stroke="#c8c830" stroke-width="0.5"/><line x1="940" y1="418" x2="949.4" y2="416" stroke="#c8c830" stroke-width="0.5"/><line x1="945" y1="417" x2="945" y2="430" stroke="#c8c830" stroke-width="0.5"/><path d="M933,424 L938,418 M934,420 L940,424" stroke="#c8c830" stroke-width="0.7" fill="none"/><line x1="820" y1="419" x2="820" y2="425" stroke="#b0b030" stroke-width="0.5"/><line x1="818" y1="421" x2="822" y2="421" stroke="#b0b030" stroke-width="0.5"/><line x1="826" y1="419" x2="826" y2="425" stroke="#b0b030" stroke-width="0.5"/><line x1="824" y1="421" x2="828" y2="421" stroke="#b0b030" stroke-width="0.5"/><line x1="832" y1="419" x2="832" y2="425" stroke="#b0b030" stroke-width="0.5"/><line x1="830" y1="421" x2="834" y2="421" stroke="#b0b030" stroke-width="0.5"/><line x1="838" y1="419" x2="838" y2="425" stroke="#b0b030" stroke-width="0.5"/><line x1="836" y1="421" x2="840" y2="421" stroke="#b0b030" stroke-width="0.5"/><line x1="847" y1="419" x2="847" y2="425" stroke="#b0b030" stroke-width="0.5"/><line x1="845" y1="421" x2="849" y2="421" stroke="#b0b030" stroke-width="0.5"/><line x1="852" y1="419" x2="852" y2="425" stroke="#b0b030" stroke-width="0.5"/><line x1="850" y1="421" x2="854" y2="421" stroke="#b0b030" stroke-width="0.5"/><line x1="858" y1="419" x2="858" y2="425" stroke="#b0b030" stroke-width="0.5"/><line x1="856" y1="421" x2="860" y2="421" stroke="#b0b030" stroke-width="0.5"/><line x1="864" y1="419" x2="864" y2="425" stroke="#b0b030" stroke-width="0.5"/><line x1="862" y1="421" x2="866" y2="421" stroke="#b0b030" stroke-width="0.5"/><line x1="878" y1="419" x2="878" y2="425" stroke="#b0b030" stroke-width="0.5"/><line x1="876" y1="421" x2="880" y2="421" stroke="#b0b030" stroke-width="0.5"/><line x1="884" y1="419" x2="884" y2="425" stroke="#b0b030" stroke-width="0.5"/><line x1="882" y1="421" x2="886" y2="421" stroke="#b0b030" stroke-width="0.5"/><line x1="893" y1="419" x2="893" y2="425" stroke="#b0b030" stroke-width="0.5"/><line x1="891" y1="421" x2="895" y2="421" stroke="#b0b030" stroke-width="0.5"/><line x1="905" y1="419" x2="905" y2="425" stroke="#b0b030" stroke-width="0.5"/><line x1="903" y1="421" x2="907" y2="421" stroke="#b0b030" stroke-width="0.5"/><line x1="921" y1="419" x2="921" y2="425" stroke="#b0b030" stroke-width="0.5"/><line x1="919" y1="421" x2="923" y2="421" stroke="#b0b030" stroke-width="0.5"/><line x1="935" y1="419" x2="935" y2="425" stroke="#b0b030" stroke-width="0.5"/><line x1="933" y1="421" x2="937" y2="421" stroke="#b0b030" stroke-width="0.5"/><line x1="957" y1="419" x2="957" y2="425" stroke="#b0b030" stroke-width="0.5"/><line x1="955" y1="421" x2="959" y2="421" stroke="#b0b030" stroke-width="0.5"/><line x1="817" y1="443" x2="817" y2="484.5" stroke="#c8c830" stroke-width="0.6"/><line x1="963.2" y1="440" x2="963.2" y2="484.5" stroke="#c8c830" stroke-width="0.6"/><line x1="900.4" y1="443" x2="900.4" y2="473.3" stroke="#c8c830" stroke-width="0.6"/><line x1="869.8" y1="446" x2="869.8" y2="473.3" stroke="#c8c830" stroke-width="0.6"/><line x1="858" y1="444" x2="858" y2="464" stroke="#c8c830" stroke-width="0.6"/><line x1="852" y1="444" x2="852" y2="464" stroke="#c8c830" stroke-width="0.6"/><line x1="881" y1="444" x2="881" y2="464" stroke="#c8c830" stroke-width="0.6"/><line x1="888" y1="444" x2="888" y2="464" stroke="#c8c830" stroke-width="0.6"/><line x1="840.7" y1="443" x2="840.7" y2="455" stroke="#c8c830" stroke-width="0.6"/><line x1="920.3" y1="443" x2="920.3" y2="456" stroke="#c8c830" stroke-width="0.6"/><line x1="938.7" y1="443" x2="938.7" y2="456" stroke="#c8c830" stroke-width="0.6"/><line x1="943" y1="443" x2="943" y2="456" stroke="#c8c830" stroke-width="0.6"/><line x1="817" y1="454.5" x2="840.7" y2="454.5" stroke="#c8c830" stroke-width="0.6"/><line x1="900.4" y1="456" x2="931" y2="456" stroke="#c8c830" stroke-width="0.6"/><line x1="943" y1="456" x2="963.2" y2="456" stroke="#c8c830" stroke-width="0.6"/><line x1="817" y1="463.7" x2="858" y2="463.7" stroke="#c8c830" stroke-width="0.6"/><line x1="881" y1="463.7" x2="888" y2="463.7" stroke="#c8c830" stroke-width="0.6"/><line x1="817" y1="473.3" x2="900.4" y2="473.3" stroke="#c8c830" stroke-width="0.6"/><line x1="900.4" y1="467" x2="909.6" y2="467" stroke="#c8c830" stroke-width="0.6"/><line x1="817" y1="484.3" x2="963.2" y2="484.3" stroke="#c8c830" stroke-width="0.7"/><rect x="828" y="453" width="3.5" height="1.2" fill="#a8a830"/><rect x="840" y="462.5" width="3.5" height="1.2" fill="#a8a830"/><rect x="855" y="472" width="3.5" height="1.2" fill="#a8a830"/><rect x="877" y="472" width="3.5" height="1.2" fill="#a8a830"/><rect x="892" y="472" width="3.5" height="1.2" fill="#a8a830"/><rect x="830" y="482.8" width="3.5" height="1.2" fill="#a8a830"/><rect x="932" y="454.5" width="3.5" height="1.2" fill="#a8a830"/><rect x="953" y="454.5" width="3.5" height="1.2" fill="#a8a830"/><rect x="820" y="447" width="3.5" height="1.3" fill="#a8a830"/><rect x="828" y="447" width="3.5" height="1.3" fill="#a8a830"/><rect x="850" y="447" width="3.5" height="1.3" fill="#a8a830"/><rect x="870" y="447" width="3.5" height="1.3" fill="#a8a830"/><rect x="905" y="447" width="3.5" height="1.3" fill="#a8a830"/><rect x="915" y="447" width="3.5" height="1.3" fill="#a8a830"/><rect x="924" y="447" width="3.5" height="1.3" fill="#a8a830"/><rect x="952" y="447" width="3.5" height="1.3" fill="#a8a830"/><rect x="957" y="447" width="3.5" height="1.3" fill="#a8a830"/><rect x="995.4" y="476.6" width="65.8" height="27.5" rx="0" stroke="#1414e8" stroke-width="1.6" fill="none"/><line x1="995.4" y1="480.5" x2="1025" y2="480.5" stroke="#d8d8e8" stroke-width="0.45"/><line x1="995.4" y1="484.40000000000003" x2="1025" y2="484.40000000000003" stroke="#d8d8e8" stroke-width="0.45"/><line x1="995.4" y1="488.3" x2="1025" y2="488.3" stroke="#d8d8e8" stroke-width="0.45"/><line x1="995.4" y1="492.20000000000005" x2="1025" y2="492.20000000000005" stroke="#d8d8e8" stroke-width="0.45"/><line x1="995.4" y1="496.1" x2="1025" y2="496.1" stroke="#d8d8e8" stroke-width="0.45"/><line x1="995.4" y1="500.0" x2="1025" y2="500.0" stroke="#d8d8e8" stroke-width="0.45"/><line x1="999" y1="476.6" x2="999" y2="504" stroke="#d8d8e8" stroke-width="0.45"/><line x1="1003" y1="476.6" x2="1003" y2="504" stroke="#d8d8e8" stroke-width="0.45"/><line x1="1007" y1="476.6" x2="1007" y2="504" stroke="#d8d8e8" stroke-width="0.45"/><line x1="1011" y1="476.6" x2="1011" y2="504" stroke="#d8d8e8" stroke-width="0.45"/><line x1="1015" y1="476.6" x2="1015" y2="504" stroke="#d8d8e8" stroke-width="0.45"/><line x1="1019" y1="476.6" x2="1019" y2="504" stroke="#d8d8e8" stroke-width="0.45"/><line x1="1025" y1="476.6" x2="1025" y2="504" stroke="#d8d8e8" stroke-width="0.45"/><line x1="1025" y1="476.6" x2="1025" y2="504" stroke="#d8d8e8" stroke-width="0.5"/><line x1="1042" y1="476.6" x2="1042" y2="504" stroke="#d8d8e8" stroke-width="0.5"/><line x1="1042" y1="484" x2="1061" y2="484" stroke="#d8d8e8" stroke-width="0.5"/><line x1="1042" y1="494" x2="1061" y2="494" stroke="#d8d8e8" stroke-width="0.5"/><line x1="1025" y1="492" x2="1042" y2="492" stroke="#d8d8e8" stroke-width="0.5"/><rect x="996" y="488" width="23" height="3" fill="#a030c0" opacity="0.85"/><rect x="996" y="496" width="6" height="5" fill="#a030c0" opacity="0.7"/><rect x="1026" y="494" width="14" height="6" fill="#c040c0" opacity="0.6"/><rect x="1030" y="481" width="6" height="2" fill="#b02020"/><rect x="1046" y="479" width="10" height="2" fill="#902030"/><rect x="1046" y="488" width="10" height="2" fill="#902030"/><rect x="1046" y="497" width="10" height="2" fill="#902030"/><rect x="972.4" y="557.7" width="65.8" height="27.5" rx="0" stroke="#1414e8" stroke-width="1.6" fill="none"/><line x1="972.4" y1="561.6" x2="1000" y2="561.6" stroke="#d8d8e8" stroke-width="0.45"/><line x1="972.4" y1="565.5" x2="1000" y2="565.5" stroke="#d8d8e8" stroke-width="0.45"/><line x1="972.4" y1="569.4000000000001" x2="1000" y2="569.4000000000001" stroke="#d8d8e8" stroke-width="0.45"/><line x1="972.4" y1="573.3000000000001" x2="1000" y2="573.3000000000001" stroke="#d8d8e8" stroke-width="0.45"/><line x1="972.4" y1="577.2" x2="1000" y2="577.2" stroke="#d8d8e8" stroke-width="0.45"/><line x1="972.4" y1="581.1" x2="1000" y2="581.1" stroke="#d8d8e8" stroke-width="0.45"/><line x1="976" y1="557.7" x2="976" y2="585.2" stroke="#d8d8e8" stroke-width="0.45"/><line x1="980" y1="557.7" x2="980" y2="585.2" stroke="#d8d8e8" stroke-width="0.45"/><line x1="984" y1="557.7" x2="984" y2="585.2" stroke="#d8d8e8" stroke-width="0.45"/><line x1="988" y1="557.7" x2="988" y2="585.2" stroke="#d8d8e8" stroke-width="0.45"/><line x1="992" y1="557.7" x2="992" y2="585.2" stroke="#d8d8e8" stroke-width="0.45"/><line x1="1000" y1="557.7" x2="1000" y2="585.2" stroke="#d8d8e8" stroke-width="0.45"/><line x1="1012" y1="557.7" x2="1012" y2="585.2" stroke="#d8d8e8" stroke-width="0.45"/><line x1="1023" y1="557.7" x2="1023" y2="585.2" stroke="#d8d8e8" stroke-width="0.45"/><line x1="1000" y1="566" x2="1023" y2="566" stroke="#d8d8e8" stroke-width="0.45"/><line x1="1000" y1="575" x2="1038" y2="575" stroke="#d8d8e8" stroke-width="0.45"/><line x1="1023" y1="566" x2="1038" y2="566" stroke="#d8d8e8" stroke-width="0.45"/><rect x="1004" y="563" width="14" height="1.5" fill="#e0e0e0"/><rect x="1026" y="561" width="9" height="1.5" fill="#e0e0e0"/><rect x="1026" y="570" width="8" height="1.5" fill="#e0e0e0"/><rect x="1026" y="579" width="7" height="1.5" fill="#c0c0c0"/><rect x="973" y="567" width="26" height="2" fill="#d0d0d0" opacity="0.8"/><rect x="1002" y="572" width="18" height="1.5" fill="#d0d0d0"/><rect x="984.6" y="507.4" width="7.7" height="1.5" fill="#d8d8d8"/><rect x="972.8" y="514.3" width="30" height="1.3" fill="#c8c8c8"/><rect x="972.8" y="517.9" width="26" height="1.3" fill="#c8c8c8"/><rect x="972.8" y="521.5" width="18" height="1.3" fill="#c8c8c8"/><rect x="972.8" y="525.0999999999999" width="27" height="1.3" fill="#c8c8c8"/><rect x="938.7" y="505.7" width="16.8" height="4" rx="0" stroke="#c8c830" stroke-width="0.6" fill="none"/><line x1="934" y1="508.4" x2="934" y2="520" stroke="#c8c830" stroke-width="0.6"/><ellipse cx="927.9" cy="519.8" rx="5.4" ry="7.9" stroke="#f0f000" stroke-width="1.6" fill="none"/><path d="M929.5,515.5 L932,515.5 Q933.5,519.8 932,524 L929.5,524 Z" fill="#f0f0f0"/><line x1="920" y1="519.8" x2="936" y2="519.8" stroke="#909090" stroke-width="0.5"/><line x1="927.9" y1="508.4" x2="927.9" y2="512" stroke="#c0c0c0" stroke-width="0.5"/><rect x="922" y="528.6" width="12" height="10.8" rx="0" stroke="#c8c830" stroke-width="0.6" fill="none"/><rect x="923" y="535" width="8" height="2.5" fill="#b0b030"/><rect x="935" y="511" width="1.5" height="14" fill="#a0a030"/></svg>
</body></html>
